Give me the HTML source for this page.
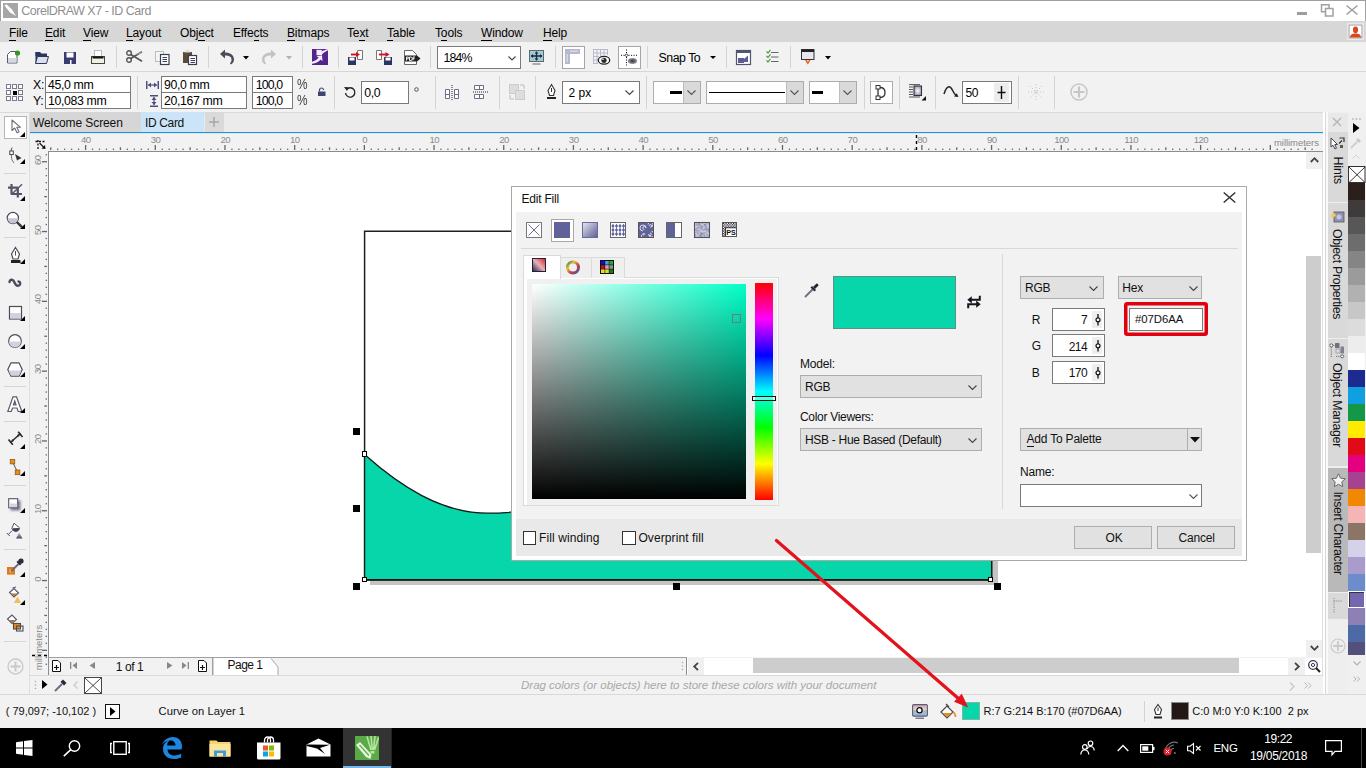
<!DOCTYPE html><html><head><meta charset="utf-8"><style>
html,body{margin:0;padding:0;}body{width:1366px;height:768px;position:relative;overflow:hidden;background:#f2f2f2;font-family:"Liberation Sans",sans-serif;}
div{position:absolute;box-sizing:border-box;}svg{position:absolute;overflow:visible;}.t{white-space:nowrap;}
u{text-decoration:none;border-bottom:1px solid currentColor;}
</style></head><body>
<div style="left:0px;top:0px;width:1366px;height:21px;background:#fff;border-top:1px solid #a0a0a0;border-left:1px solid #a0a0a0;border-right:1px solid #a0a0a0;"></div>
<svg style="left:3px;top:3px;" width="15" height="15" viewBox="0 0 15 15"><rect width="15" height="15" fill="#a6a6a6"/><path d="M1.5 2.5L3.5 1.2L9 6.5L13 13L7 9.5Z" fill="#fff"/><path d="M2 6L6.5 10.5L13.5 13.5L5 12.5Z" fill="#fff" opacity="0.0"/></svg>
<div class="t" style="left:21.3px;top:4.12px;font-size:12.5px;line-height:15px;color:#8f8f8f;letter-spacing:-0.5px;">CorelDRAW X7 - ID Card</div>
<div style="left:1297px;top:12px;width:10px;height:3px;background:#9e9e9e;"></div>
<svg style="left:1320px;top:4px;" width="14" height="13" viewBox="0 0 14 13"><rect x="1.5" y="0.75" width="7.5" height="7" fill="#fff" stroke="#a0a0a0" stroke-width="1.5"/><rect x="5.5" y="4.5" width="7.5" height="7.5" fill="#fff" stroke="#a0a0a0" stroke-width="1.5"/></svg>
<svg style="left:1346px;top:5px;" width="12" height="10" viewBox="0 0 12 10"><path d="M0.5 0.5L11.5 9.5M11.5 0.5L0.5 9.5" stroke="#a0a0a0" stroke-width="1.6"/></svg>
<div style="left:0px;top:21px;width:1366px;height:21px;background:#d7d7d7;"></div>
<div class="t" style="left:9px;top:25.63px;font-size:12px;line-height:14px;color:#000;letter-spacing:-0.15px;"><u>F</u>ile</div>
<div class="t" style="left:45px;top:25.63px;font-size:12px;line-height:14px;color:#000;letter-spacing:-0.15px;"><u>E</u>dit</div>
<div class="t" style="left:83px;top:25.63px;font-size:12px;line-height:14px;color:#000;letter-spacing:-0.15px;"><u>V</u>iew</div>
<div class="t" style="left:126px;top:25.63px;font-size:12px;line-height:14px;color:#000;letter-spacing:-0.15px;"><u>L</u>ayout</div>
<div class="t" style="left:180px;top:25.63px;font-size:12px;line-height:14px;color:#000;letter-spacing:-0.15px;">Obj<u>e</u>ct</div>
<div class="t" style="left:233px;top:25.63px;font-size:12px;line-height:14px;color:#000;letter-spacing:-0.15px;">Effe<u>c</u>ts</div>
<div class="t" style="left:287px;top:25.63px;font-size:12px;line-height:14px;color:#000;letter-spacing:-0.15px;"><u>B</u>itmaps</div>
<div class="t" style="left:347px;top:25.63px;font-size:12px;line-height:14px;color:#000;letter-spacing:-0.15px;">Te<u>x</u>t</div>
<div class="t" style="left:387px;top:25.63px;font-size:12px;line-height:14px;color:#000;letter-spacing:-0.15px;"><u>T</u>able</div>
<div class="t" style="left:435px;top:25.63px;font-size:12px;line-height:14px;color:#000;letter-spacing:-0.15px;">T<u>o</u>ols</div>
<div class="t" style="left:481px;top:25.63px;font-size:12px;line-height:14px;color:#000;letter-spacing:-0.15px;"><u>W</u>indow</div>
<div class="t" style="left:543px;top:25.63px;font-size:12px;line-height:14px;color:#000;letter-spacing:-0.15px;"><u>H</u>elp</div>
<div style="left:1347px;top:23px;width:17px;height:17px;background:#fff;border:1px solid #e8e8e8;"></div>
<svg style="left:1349px;top:25px;" width="13" height="13" viewBox="0 0 13 13"><rect x="0" y="0" width="13" height="13" fill="#fff" stroke="#9a9a9a" stroke-width="1"/><ellipse cx="6.5" cy="4.8" rx="2.6" ry="3.4" fill="#d9471c"/><path d="M0.8 12.5C1.5 9.2 3.5 8.5 6.5 8.5C9.5 8.5 11.5 9.2 12.2 12.5Z" fill="#d9471c"/></svg>
<div style="left:0px;top:42px;width:1366px;height:30px;background:#f2f2f2;border-bottom:1px solid #d6d6d6;"></div>
<svg style="left:6px;top:50px;" width="15" height="14" viewBox="0 0 15 14"><path d="M1.5 4.5L4.5 1.5H11V13H1.5Z" fill="#fff" stroke="#555a70" stroke-width="1"/><rect x="2" y="8" width="8.5" height="4.5" fill="#d6d8e2"/><circle cx="11.5" cy="3" r="2.6" fill="#2e9a1e"/></svg>
<svg style="left:35px;top:51px;" width="14" height="13" viewBox="0 0 14 13"><path d="M0.5 1H5L6.5 2.5H12V5H0.5Z" fill="#2c3561"/><rect x="0.5" y="1" width="2" height="11.5" fill="#2c3561"/><path d="M0.5 12.5L2.5 5.5H13.5L11.5 12.5Z" fill="#dde0ea" stroke="#2c3561" stroke-width="1"/></svg>
<svg style="left:64px;top:52px;" width="12" height="12" viewBox="0 0 12 12"><rect x="0" y="0" width="12" height="12" fill="#383c70"/><rect x="2.5" y="0.5" width="7" height="5" fill="#fff"/><rect x="6" y="8" width="1.5" height="4" fill="#fff"/></svg>
<svg style="left:91px;top:50px;" width="14" height="14" viewBox="0 0 14 14"><rect x="3.5" y="0.5" width="7" height="6" fill="#fff" stroke="#bbb" stroke-width="1"/><rect x="0.5" y="6.5" width="13" height="7" fill="#f3efdf" stroke="#444" stroke-width="1"/><rect x="1.5" y="6.5" width="11" height="2" fill="#111"/></svg>
<div style="left:116px;top:46px;width:1px;height:22px;background:#d4d4d4;"></div>
<svg style="left:126px;top:50px;" width="17" height="13" viewBox="0 0 17 13"><circle cx="3" cy="3" r="2.3" fill="none" stroke="#555" stroke-width="1.4"/><circle cx="3" cy="10" r="2.3" fill="none" stroke="#555" stroke-width="1.4"/><path d="M4.8 8.5L16 1.8M4.8 4.5L16 11.2" stroke="#555" stroke-width="1.6"/><path d="M9 5L16 1.8L15 3.5Z" fill="#aaa"/></svg>
<svg style="left:155px;top:51px;" width="15" height="14" viewBox="0 0 15 14"><rect x="0.5" y="0.5" width="8" height="10" fill="#f4f6f4" stroke="#b8c0b8" stroke-width="1"/><rect x="5.5" y="3.5" width="8.5" height="10" fill="#fff" stroke="#3a3e55" stroke-width="1.2"/><path d="M7.5 6.5H12M7.5 8.5H12M7.5 10.5H12" stroke="#3a3e55" stroke-width="1"/></svg>
<svg style="left:183px;top:50px;" width="14" height="15" viewBox="0 0 14 15"><rect x="0" y="2" width="9" height="11" fill="#5a4a3a"/><path d="M1.5 2.5H7.5L6 0H3Z" fill="#ddd"/><rect x="5.5" y="5.5" width="8" height="9" fill="#fff" stroke="#3a3e55" stroke-width="1.2"/><path d="M7.5 8.5H12M7.5 10.5H12M7.5 12.5H12" stroke="#3a3e55" stroke-width="1"/></svg>
<div style="left:208px;top:46px;width:1px;height:22px;background:#d4d4d4;"></div>
<svg style="left:219px;top:49px;" width="16" height="16" viewBox="0 0 16 16"><path d="M1 5L6 0.5V3.5C11 3.5 15 6 15 10.5C15 13 13.5 15 11.5 15.5L11 14C12 13.5 12.5 12 12.5 10.5C12.5 7.5 10 6.5 6 6.5V9.5Z" fill="#4b4b5a"/></svg>
<svg style="left:243px;top:56px;" width="6" height="3.5" viewBox="0 0 6 3.5"><path d="M0 0H6L3.0 3.5Z" fill="#000"/></svg>
<svg style="left:261px;top:49px;" width="16" height="16" viewBox="0 0 16 16"><path d="M15 5L10 0.5V3.5C5 3.5 1 6 1 10.5C1 13 2.5 15 4.5 15.5L5 14C4 13.5 3.5 12 3.5 10.5C3.5 7.5 6 6.5 10 6.5V9.5Z" fill="#c2c2c2"/></svg>
<svg style="left:286px;top:56px;" width="6" height="3.5" viewBox="0 0 6 3.5"><path d="M0 0H6L3.0 3.5Z" fill="#b0b0b0"/></svg>
<div style="left:302px;top:46px;width:1px;height:22px;background:#d4d4d4;"></div>
<svg style="left:312px;top:49px;" width="16" height="16" viewBox="0 0 16 16"><rect width="16" height="16" fill="#55248a"/><path d="M4.5 0.8L10.5 1L9.2 2.6C11.2 1.8 13.2 0.7 16 0V1.2C13.5 2.4 11.2 3.8 10 5.6L10 6.2H4.5Z" fill="#f4ecff"/><path d="M0 12.8C2.8 12 5 10.8 6.6 8.6L4.4 7.3L10 6.6L10.5 12.2L8.7 10.4C7 12.6 4 14 0 14.8Z" fill="#f4ecff"/></svg>
<div style="left:338px;top:46px;width:1px;height:22px;background:#d4d4d4;"></div>
<svg style="left:347px;top:50px;" width="18" height="15" viewBox="0 0 18 15"><path d="M10.5 0.5H15.5V9.5H10.5L10.5 3Z" fill="#fff" stroke="#777" stroke-width="1"/><rect x="1" y="7" width="8" height="8" fill="#2c3561"/><rect x="2.5" y="7.5" width="5" height="3" fill="#fff"/><path d="M4 4.5H10" stroke="#d0101a" stroke-width="1.8"/><path d="M9 2L13 4.5L9 7Z" fill="#d0101a"/></svg>
<svg style="left:376px;top:50px;" width="17" height="15" viewBox="0 0 17 15"><path d="M0.5 0.5H5.5V9.5H0.5Z" fill="#fff" stroke="#777" stroke-width="1"/><rect x="8" y="7" width="8" height="8" fill="#2c3561"/><rect x="9.5" y="7.5" width="5" height="3" fill="#fff"/><path d="M3 4.5H10" stroke="#d0101a" stroke-width="1.8"/><path d="M9.5 2L13.5 4.5L9.5 7Z" fill="#d0101a"/></svg>
<svg style="left:404px;top:50px;" width="17" height="15" viewBox="0 0 17 15"><path d="M0.5 0.5H8.5L12.5 4.5V14.5H0.5Z" fill="#fff" stroke="#666" stroke-width="1"/><path d="M1 5.5H13L16.5 8.5L13 11.5H1Z" fill="#222"/><path d="M2.5 7V10.5M2.5 7H4.3V8.8H2.5M5.5 7V10.5H7A1 1.5 0 0 0 7 7H5.5M9 7V10.5M9 7H11M9 8.7H10.7" fill="none" stroke="#fff" stroke-width="0.9"/></svg>
<div style="left:430px;top:46px;width:1px;height:22px;background:#d4d4d4;"></div>
<div style="left:437px;top:46px;width:84px;height:23px;background:#fff;border:1px solid #7a7a7a;"></div>
<div class="t" style="left:443.6px;top:51.04px;font-size:12.3px;line-height:15px;color:#000;letter-spacing:-0.9px;">184%</div>
<svg style="left:508px;top:55.5px;" width="8" height="4.5" viewBox="0 0 8 4.5"><path d="M0.5 0.5L4.0 4.0L7.5 0.5" fill="none" stroke="#444" stroke-width="1.1"/></svg>
<svg style="left:529px;top:50px;" width="15" height="15" viewBox="0 0 15 15"><rect x="0.5" y="0.5" width="14" height="11" fill="#9fcbd8" stroke="#666" stroke-width="1"/><rect x="3.5" y="13.5" width="8" height="1" fill="#666"/><path d="M2 6H13M7.5 1.8V10.2" stroke="#1c2a3a" stroke-width="1.3"/><path d="M1.8 6L4 4V8ZM13.2 6L11 4V8ZM7.5 1.6L5.5 3.6H9.5ZM7.5 10.4L5.5 8.4H9.5Z" fill="#1c2a3a"/></svg>
<div style="left:555px;top:46px;width:1px;height:22px;background:#d4d4d4;"></div>
<div style="left:562px;top:46px;width:23px;height:23px;background:#fff;border:1px solid #a5a5a5;"></div>
<svg style="left:565px;top:49px;" width="16" height="15" viewBox="0 0 16 15"><path d="M0 0H15V5H5V15H0Z" fill="#b4b9cc"/><path d="M6 1.5V3M8 1.5V3M10 1.5V3M12 1.5V3M1.5 6H3M1.5 8H3M1.5 10H3M1.5 12H3" stroke="#fff" stroke-width="0.9"/></svg>
<svg style="left:593px;top:49px;" width="17" height="16" viewBox="0 0 17 16"><path d="M0.5 0V15M4 0V15M7.5 0V8M11 0V6M14.5 0V6M0 0.5H15M0 4H15M0 7.5H6M0 11H5M0 14.5H5" stroke="#b4b4cc" stroke-width="0.9"/><ellipse cx="11" cy="11.3" rx="5.7" ry="3.9" fill="#fff" stroke="#222" stroke-width="1.3"/><circle cx="11" cy="11.3" r="2.6" fill="#2a2a2a"/><circle cx="10" cy="10.3" r="0.8" fill="#fff"/></svg>
<div style="left:618px;top:46px;width:23px;height:23px;background:#fff;border:1px solid #a5a5a5;"></div>
<svg style="left:621px;top:49px;" width="17" height="17" viewBox="0 0 17 17"><path d="M5.5 0.5V16.5M0 6.3H16" stroke="#111" stroke-width="1" stroke-dasharray="1.1 1.4"/><path d="M5.5 4.8L7 6.3L5.5 7.8L4 6.3Z" fill="#fff" stroke="#111" stroke-width="0.8"/><defs><radialGradient id="eg"><stop offset="0" stop-color="#333"/><stop offset="1" stop-color="#9a9aa8"/></radialGradient></defs><ellipse cx="11.5" cy="12" rx="4.6" ry="3" fill="url(#eg)"/></svg>
<div style="left:647px;top:46px;width:1px;height:22px;background:#d4d4d4;"></div>
<div class="t" style="left:658.5px;top:51.24px;font-size:12.3px;line-height:15px;color:#000;letter-spacing:-0.45px;">Snap To</div>
<svg style="left:710px;top:56px;" width="6" height="3" viewBox="0 0 6 3"><path d="M0 0H6L3.0 3Z" fill="#000"/></svg>
<div style="left:726px;top:46px;width:1px;height:22px;background:#d4d4d4;"></div>
<svg style="left:736px;top:50px;" width="15" height="15" viewBox="0 0 15 15"><rect x="0.5" y="0.5" width="14" height="14" fill="#fff" stroke="#505570" stroke-width="1.2"/><rect x="0.5" y="0.5" width="14" height="2.5" fill="#505570"/><rect x="2" y="8" width="6" height="5" fill="#5b5c9a"/><path d="M8 9L12 5.5V12H8Z" fill="#5b5c9a"/></svg>
<svg style="left:766px;top:49px;" width="13" height="15" viewBox="0 0 13 15"><path d="M0.5 2.5L2 4L4.5 0.8M0.5 7L2 8.5L4.5 5.3M0.5 11.5L2 13L4.5 9.8" fill="none" stroke="#3c9a2c" stroke-width="1.1"/><path d="M5 3.5H12.5M5 8H12.5M5 12.5H12.5" stroke="#666" stroke-width="1"/></svg>
<div style="left:790px;top:46px;width:1px;height:22px;background:#d4d4d4;"></div>
<svg style="left:801px;top:49px;" width="14" height="16" viewBox="0 0 14 16"><rect x="0.5" y="0.5" width="12.5" height="10" fill="#e6e6ee" stroke="#333" stroke-width="1"/><rect x="0.5" y="0.5" width="12.5" height="2.5" fill="#222"/><path d="M4 11L6.8 15.5L9.5 11Z" fill="#e84a20"/><path d="M5.3 11L6.8 13.5L8.3 11Z" fill="#ffc640"/></svg>
<svg style="left:825px;top:56px;" width="6" height="3.5" viewBox="0 0 6 3.5"><path d="M0 0H6L3.0 3.5Z" fill="#000"/></svg>
<div style="left:0px;top:72px;width:1366px;height:40px;background:#f2f2f2;"></div>
<svg style="left:6px;top:84px;" width="16" height="16" viewBox="0 0 16 16"><rect x="0.5" y="0.5" width="4" height="4" fill="#fff" stroke="#7b7b8e" stroke-width="1"/><rect x="0.5" y="6.5" width="4" height="4" fill="#fff" stroke="#7b7b8e" stroke-width="1"/><rect x="0.5" y="12.5" width="4" height="4" fill="#fff" stroke="#7b7b8e" stroke-width="1"/><rect x="6.5" y="0.5" width="4" height="4" fill="#fff" stroke="#7b7b8e" stroke-width="1"/><rect x="7.0" y="7.0" width="4" height="4" fill="#000"/><rect x="6.5" y="12.5" width="4" height="4" fill="#fff" stroke="#7b7b8e" stroke-width="1"/><rect x="12.5" y="0.5" width="4" height="4" fill="#fff" stroke="#7b7b8e" stroke-width="1"/><rect x="12.5" y="6.5" width="4" height="4" fill="#fff" stroke="#7b7b8e" stroke-width="1"/><rect x="12.5" y="12.5" width="4" height="4" fill="#fff" stroke="#7b7b8e" stroke-width="1"/></svg>
<div class="t" style="left:33px;top:77.94px;font-size:12.3px;line-height:15px;color:#000;letter-spacing:-0.3px;">X:</div>
<div class="t" style="left:33px;top:93.94px;font-size:12.3px;line-height:15px;color:#000;letter-spacing:-0.3px;">Y:</div>
<div style="left:45px;top:76px;width:86px;height:17px;background:#fff;border:1px solid #7a7a7a;"></div>
<div style="left:45px;top:92px;width:86px;height:17px;background:#fff;border:1px solid #7a7a7a;"></div>
<div class="t" style="left:48px;top:77.94px;font-size:12.3px;line-height:15px;color:#000;letter-spacing:-0.35px;">45,0 mm</div>
<div class="t" style="left:48px;top:93.94px;font-size:12.3px;line-height:15px;color:#000;letter-spacing:-0.35px;">10,083 mm</div>
<div style="left:137px;top:76px;width:1px;height:33px;background:#d4d4d4;"></div>
<svg style="left:146px;top:81px;" width="13" height="8" viewBox="0 0 13 8"><path d="M0.75 0V8M12.25 0V8" stroke="#4a4f80" stroke-width="1.5"/><path d="M2 4H11" stroke="#4a4f80" stroke-width="1.2"/><path d="M2 4L5 1.5V6.5ZM11 4L8 1.5V6.5Z" fill="#4a4f80"/></svg>
<svg style="left:149.5px;top:95px;" width="8" height="12" viewBox="0 0 8 12"><path d="M0 0.75H8M0 11.25H8" stroke="#4a4f80" stroke-width="1.5"/><path d="M4 2V10" stroke="#4a4f80" stroke-width="1.2"/><path d="M4 2L1.5 5H6.5ZM4 10L1.5 7H6.5Z" fill="#4a4f80"/></svg>
<div style="left:161px;top:76px;width:86px;height:17px;background:#fff;border:1px solid #7a7a7a;"></div>
<div style="left:161px;top:92px;width:86px;height:17px;background:#fff;border:1px solid #7a7a7a;"></div>
<div class="t" style="left:164px;top:77.94px;font-size:12.3px;line-height:15px;color:#000;letter-spacing:-0.35px;">90,0 mm</div>
<div class="t" style="left:164px;top:93.94px;font-size:12.3px;line-height:15px;color:#000;letter-spacing:-0.35px;">20,167 mm</div>
<div style="left:252px;top:76px;width:41px;height:17px;background:#fff;border:1px solid #7a7a7a;"></div>
<div style="left:252px;top:92px;width:41px;height:17px;background:#fff;border:1px solid #7a7a7a;"></div>
<div class="t" style="left:255.8px;top:77.94px;font-size:12.3px;line-height:15px;color:#000;letter-spacing:-0.85px;">100,0</div>
<div class="t" style="left:255.8px;top:94.14px;font-size:12.3px;line-height:15px;color:#000;letter-spacing:-0.85px;">100,0</div>
<div class="t" style="left:297px;top:76.20px;font-size:14px;line-height:17px;color:#444;transform:scaleX(0.85);transform-origin:0 0;">%</div>
<div class="t" style="left:297px;top:92.40px;font-size:14px;line-height:17px;color:#444;transform:scaleX(0.85);transform-origin:0 0;">%</div>
<svg style="left:318px;top:88px;" width="8" height="8" viewBox="0 0 8 8"><path d="M1.5 3.5V2A2 2 0 0 1 5.5 2" fill="none" stroke="#3f4470" stroke-width="1.2"/><rect x="0" y="3.5" width="7.5" height="4.5" fill="#3f4470"/></svg>
<div style="left:334px;top:76px;width:1px;height:33px;background:#d4d4d4;"></div>
<svg style="left:344px;top:86px;" width="12" height="12" viewBox="0 0 12 12"><path d="M2.5 3.5A4.7 4.7 0 1 1 1.5 7" fill="none" stroke="#222" stroke-width="1.4"/><path d="M0 1L4.5 1.2L3 5Z" fill="#222"/></svg>
<div style="left:361px;top:81px;width:48px;height:23px;background:#fff;border:1px solid #7a7a7a;"></div>
<div class="t" style="left:364.3px;top:85.54px;font-size:12.3px;line-height:15px;color:#000;letter-spacing:-0.4px;">0,0</div>
<svg style="left:414px;top:87px;" width="5" height="5" viewBox="0 0 5 5"><circle cx="2.5" cy="2.5" r="1.8" fill="none" stroke="#444" stroke-width="0.9"/></svg>
<div style="left:435px;top:76px;width:1px;height:33px;background:#d4d4d4;"></div>
<svg style="left:444px;top:84px;" width="16" height="16" viewBox="0 0 16 16"><path d="M1.5 5.5H5.5V14.5H1.5Z M10.5 5.5H14.5V14.5H10.5Z" fill="#fff" stroke="#6a6e88" stroke-width="1"/><path d="M1.5 10.5H5.5M10.5 10.5H14.5" stroke="#6a6e88"/><path d="M8 1V16" stroke="#222" stroke-width="1" stroke-dasharray="1 1"/></svg>
<svg style="left:473px;top:84px;" width="16" height="16" viewBox="0 0 16 16"><path d="M1.5 1.5H10.5V5.5H1.5Z M1.5 10.5H10.5V14.5H1.5Z" fill="#fff" stroke="#6a6e88" stroke-width="1"/><path d="M6.5 1.5V5.5M6.5 10.5V14.5" stroke="#6a6e88"/><path d="M0 8H16" stroke="#222" stroke-width="1" stroke-dasharray="1 1"/></svg>
<div style="left:499px;top:76px;width:1px;height:33px;background:#d4d4d4;"></div>
<svg style="left:509px;top:84px;" width="16" height="16" viewBox="0 0 16 16"><rect x="0.5" y="0.5" width="9" height="9" fill="#ddd" stroke="#ccc"/><rect x="6.5" y="6.5" width="9" height="9" fill="#ddd" stroke="#ccc"/><path d="M11 1H15V5M5 15H1V11" fill="none" stroke="#bbb"/></svg>
<div style="left:535px;top:76px;width:1px;height:33px;background:#d4d4d4;"></div>
<svg style="left:546px;top:84px;" width="11" height="16" viewBox="0 0 11 16"><path d="M5.5 0.5L9 6.5L7.5 11.5H3.5L2 6.5Z" fill="#fff" stroke="#333" stroke-width="1.1"/><path d="M5.5 4V8" stroke="#333"/><rect x="1" y="13" width="9" height="2" fill="#222"/></svg>
<div style="left:562px;top:81px;width:78px;height:23px;background:#fff;border:1px solid #7a7a7a;"></div>
<div class="t" style="left:568.5px;top:85.63px;font-size:12px;line-height:14px;color:#000;">2 px</div>
<svg style="left:625px;top:90px;" width="9" height="5" viewBox="0 0 9 5"><path d="M0.5 0.5L4.5 4.5L8.5 0.5" fill="none" stroke="#444" stroke-width="1.1"/></svg>
<div style="left:646px;top:76px;width:1px;height:33px;background:#d4d4d4;"></div>
<div style="left:653px;top:81px;width:48px;height:23px;background:#fff;border:1px solid #adadad;"></div>
<div style="left:670px;top:91px;width:12px;height:3px;background:#000;"></div>
<div style="left:683px;top:82px;width:17px;height:21px;background:#d9d9d9;border-left:1px solid #bdbdbd;"></div>
<svg style="left:687px;top:90px;" width="9" height="5" viewBox="0 0 9 5"><path d="M0.5 0.5L4.5 4.5L8.5 0.5" fill="none" stroke="#555" stroke-width="1.1"/></svg>
<div style="left:706px;top:81px;width:98px;height:23px;background:#fff;border:1px solid #adadad;"></div>
<div style="left:709px;top:92px;width:76px;height:1px;background:#000;"></div>
<div style="left:786px;top:82px;width:17px;height:21px;background:#d9d9d9;border-left:1px solid #bdbdbd;"></div>
<svg style="left:790px;top:90px;" width="9" height="5" viewBox="0 0 9 5"><path d="M0.5 0.5L4.5 4.5L8.5 0.5" fill="none" stroke="#555" stroke-width="1.1"/></svg>
<div style="left:809px;top:81px;width:48px;height:23px;background:#fff;border:1px solid #adadad;"></div>
<div style="left:812px;top:91px;width:11px;height:3px;background:#000;"></div>
<div style="left:839px;top:82px;width:17px;height:21px;background:#d9d9d9;border-left:1px solid #bdbdbd;"></div>
<svg style="left:843px;top:90px;" width="9" height="5" viewBox="0 0 9 5"><path d="M0.5 0.5L4.5 4.5L8.5 0.5" fill="none" stroke="#555" stroke-width="1.1"/></svg>
<div style="left:864px;top:76px;width:1px;height:33px;background:#d4d4d4;"></div>
<div style="left:870px;top:81px;width:23px;height:23px;background:#fff;border:1px solid #adadad;"></div>
<svg style="left:875px;top:85px;" width="12" height="15" viewBox="0 0 12 15"><path d="M3 2.5H5C8.5 2.5 10 5 10 7.5C10 10 8.5 12.5 5 12.5H3" fill="none" stroke="#333" stroke-width="1.3"/><path d="M3 2.5V12.5" stroke="#333" stroke-width="1.3"/><rect x="1" y="0.5" width="4" height="3.5" fill="#fff" stroke="#333" stroke-width="1"/><rect x="1" y="11" width="4" height="3.5" fill="#fff" stroke="#333" stroke-width="1"/></svg>
<div style="left:899px;top:76px;width:1px;height:33px;background:#d4d4d4;"></div>
<svg style="left:909px;top:84px;" width="19" height="17" viewBox="0 0 19 17"><path d="M0 0.6H11M0 3H4M0 5.5H4M0 8H4M0 10.5H4M0 13H11" stroke="#444" stroke-width="0.9"/><defs><radialGradient id="wg"><stop offset="0" stop-color="#fff"/><stop offset="1" stop-color="#9a9cb8"/></radialGradient></defs><rect x="5" y="2" width="7.5" height="9.5" fill="url(#wg)" stroke="#333" stroke-width="1.1"/><path d="M12.5 16.5L17 16.5L17 12Z" fill="#111"/></svg>
<div style="left:935px;top:76px;width:1px;height:33px;background:#d4d4d4;"></div>
<svg style="left:943px;top:85px;" width="17" height="14" viewBox="0 0 17 14"><path d="M1 9C2.5 4 4.5 1.5 6.5 1.8C9 2.2 10 8 13 10.5" fill="none" stroke="#222" stroke-width="1.5"/><path d="M15.5 12L11 11.5L13.8 8.2Z" fill="#222"/></svg>
<div style="left:962px;top:81px;width:50px;height:23px;background:#fff;border:1px solid #7a7a7a;"></div>
<div class="t" style="left:965.5px;top:85.63px;font-size:12px;line-height:14px;color:#000;letter-spacing:-0.3px;">50</div>
<div style="left:994px;top:83px;width:15px;height:19px;background:#ededed;"></div>
<svg style="left:996px;top:85px;" width="11" height="15" viewBox="0 0 11 15"><path d="M5.5 1V14M1.5 7.5H9.5" stroke="#111" stroke-width="1.4"/></svg>
<div style="left:1018px;top:76px;width:1px;height:33px;background:#d4d4d4;"></div>
<svg style="left:1027px;top:83px;" width="18" height="18" viewBox="0 0 18 18"><path d="M3 3L15 15M15 3L3 15M1 9H17M9 1V17" stroke="#c8c8c8" stroke-width="1" stroke-dasharray="1.2 1.8"/></svg>
<div style="left:1054px;top:76px;width:1px;height:33px;background:#d4d4d4;"></div>
<svg style="left:1070px;top:83px;" width="18" height="18" viewBox="0 0 18 18"><circle cx="9" cy="9" r="8" fill="none" stroke="#c6c6c6" stroke-width="1.5"/><path d="M9 3.5V14.5M3.5 9H14.5" stroke="#c6c6c6" stroke-width="2.2"/></svg>
<div style="left:29px;top:112px;width:1294px;height:20px;background:#ebebeb;"></div>
<div style="left:0px;top:112px;width:1366px;height:1px;background:#d9d9d9;"></div>
<div style="left:29px;top:112px;width:112px;height:20px;background:#d6d6d6;"></div>
<div class="t" style="left:33px;top:115.53px;font-size:12px;line-height:14px;color:#111;letter-spacing:-0.1px;">Welcome Screen</div>
<div style="left:141px;top:112px;width:63px;height:20px;background:#cce4f7;"></div>
<div class="t" style="left:145px;top:115.53px;font-size:12px;line-height:14px;color:#111;letter-spacing:-0.35px;">ID Card</div>
<div style="left:205px;top:112px;width:19px;height:20px;background:#dadada;"></div>
<svg style="left:208px;top:116px;" width="12" height="12" viewBox="0 0 12 12"><path d="M6 1V11M1 6H11" stroke="#a8a8a8" stroke-width="1.5"/></svg>
<div style="left:29px;top:132px;width:1294px;height:1px;background:#2f8fd0;"></div>
<div style="left:29px;top:133px;width:1294px;height:1px;background:#c9ecf6;"></div>
<div style="left:0px;top:112px;width:29px;height:582px;background:#f2f2f2;"></div>
<div style="left:29px;top:112px;width:1px;height:582px;background:#dedede;"></div>
<div style="left:0px;top:112px;width:29px;height:1px;background:#d9d9d9;"></div>
<div style="left:4px;top:116px;width:23px;height:23px;background:#fff;border:1px solid #b5b5b5;"></div>
<svg style="left:10.5px;top:119px;" width="10" height="15" viewBox="0 0 10 15"><path d="M1 1V11.5L3.7 9L6 13.8L8 12.8L5.8 8.3H9.5Z" fill="#fff" stroke="#6b6b7a" stroke-width="1.1" stroke-linejoin="round"/></svg>
<svg style="left:20px;top:132px;" width="5" height="5" viewBox="0 0 5 5"><path d="M5 0V5H0Z" fill="#000"/></svg>
<svg style="left:8px;top:147px;" width="20" height="18" viewBox="0 0 20 18"><path d="M4 0.5L3 4" stroke="#555" stroke-width="1"/><rect x="1.8" y="4" width="3.5" height="3.5" fill="#fff" stroke="#444" stroke-width="1"/><path d="M3.5 7.5C3 11 4 14 6 16" fill="none" stroke="#777" stroke-width="1"/><path d="M7 7L13.5 11L9 13.5Z" fill="#333"/></svg>
<svg style="left:20px;top:159px;" width="5" height="5" viewBox="0 0 5 5"><path d="M5 0V5H0Z" fill="#000"/></svg>
<div style="left:4px;top:173px;width:22px;height:1px;background:#d6d6d6;"></div>
<svg style="left:8px;top:184px;" width="16" height="16" viewBox="0 0 16 16"><path d="M0 3.7H10M3.5 0V10.5M3 10H14M9.8 4V13.5" fill="none" stroke="#55556a" stroke-width="2.2"/><path d="M14 0.3L4 10" stroke="#55556a" stroke-width="1.4"/></svg>
<svg style="left:20px;top:196px;" width="5" height="5" viewBox="0 0 5 5"><path d="M5 0V5H0Z" fill="#000"/></svg>
<svg style="left:6px;top:211px;" width="20" height="18" viewBox="0 0 20 18"><circle cx="6.85" cy="7" r="5.6" fill="#fff" stroke="#4b4b5a" stroke-width="1.2"/><path d="M1.6 7.2H12.1A5.25 5.25 0 0 1 1.6 7.2Z" fill="#c4c6d8"/><path d="M10.8 11L16 16.2" stroke="#333" stroke-width="2.4"/></svg>
<svg style="left:20px;top:224px;" width="5" height="5" viewBox="0 0 5 5"><path d="M5 0V5H0Z" fill="#000"/></svg>
<div style="left:4px;top:237px;width:22px;height:1px;background:#d6d6d6;"></div>
<svg style="left:10px;top:247px;" width="12" height="17" viewBox="0 0 12 17"><path d="M5.5 0.5L9.5 7L8 12H3L1.5 7Z" fill="#fff" stroke="#4b4b5a" stroke-width="1.2"/><path d="M5.5 4V8.5" stroke="#4b4b5a"/><rect x="1" y="13" width="9.5" height="3" fill="#222"/></svg>
<svg style="left:20px;top:259px;" width="5" height="5" viewBox="0 0 5 5"><path d="M5 0V5H0Z" fill="#000"/></svg>
<svg style="left:8px;top:278px;" width="14" height="10" viewBox="0 0 14 10"><path d="M1.5 4C2 1 5 1 6 3.5C7 6 8.5 8.5 11 7.5C13 6.5 12.5 3.5 10.5 3.5" fill="none" stroke="#4b4b5a" stroke-width="2.4" stroke-linecap="round"/></svg>
<svg style="left:9px;top:306px;" width="13" height="14" viewBox="0 0 13 14"><rect x="0.5" y="0.5" width="12" height="12.5" fill="#fff" stroke="#4b4b5a" stroke-width="1.2"/><rect x="1" y="7" width="11" height="5.5" fill="#d0d2de"/></svg>
<svg style="left:20px;top:316px;" width="5" height="5" viewBox="0 0 5 5"><path d="M5 0V5H0Z" fill="#000"/></svg>
<svg style="left:8px;top:334px;" width="14" height="14" viewBox="0 0 14 14"><circle cx="7" cy="7" r="6.3" fill="#fff" stroke="#4b4b5a" stroke-width="1.2"/><path d="M1 7.5H13A6 6 0 0 1 1 7.5Z" fill="#d0d2de"/></svg>
<svg style="left:20px;top:344px;" width="5" height="5" viewBox="0 0 5 5"><path d="M5 0V5H0Z" fill="#000"/></svg>
<svg style="left:7px;top:362px;" width="16" height="15" viewBox="0 0 16 15"><path d="M4 0.8H12L15.2 7.5L12 14.2H4L0.8 7.5Z" fill="#fff" stroke="#4b4b5a" stroke-width="1.2"/><path d="M1.5 8.5H14.5L12 13.5H4Z" fill="#d0d2de"/></svg>
<svg style="left:20px;top:372px;" width="5" height="5" viewBox="0 0 5 5"><path d="M5 0V5H0Z" fill="#000"/></svg>
<div style="left:4px;top:386px;width:22px;height:1px;background:#d6d6d6;"></div>
<svg style="left:7px;top:396px;" width="16" height="16" viewBox="0 0 16 16"><path d="M0.8 15.5L6 0.8H9.5L14.8 15.5H11.2L10 12H5.5L4.3 15.5Z M6.5 9H9L7.75 5Z" fill="#fff" stroke="#5a5a6a" stroke-width="1.2" fill-rule="evenodd"/><path d="M2 14L6.5 2" stroke="#d8d8e0" stroke-width="0"/></svg>
<svg style="left:20px;top:408px;" width="5" height="5" viewBox="0 0 5 5"><path d="M5 0V5H0Z" fill="#000"/></svg>
<div style="left:4px;top:421px;width:22px;height:1px;background:#d6d6d6;"></div>
<svg style="left:8px;top:431px;" width="15" height="15" viewBox="0 0 15 15"><path d="M2.5 11.5L12.5 2.5" stroke="#2a2a35" stroke-width="1.5"/><path d="M0.5 8.5L4.8 13.8M10.2 0.8L14.5 6" stroke="#2a2a35" stroke-width="1.7"/><path d="M2.5 11.5L4.5 8L6 10ZM12.5 2.5L10.5 6L9 4Z" fill="#2a2a35"/></svg>
<svg style="left:20px;top:444px;" width="5" height="5" viewBox="0 0 5 5"><path d="M5 0V5H0Z" fill="#000"/></svg>
<svg style="left:9px;top:459px;" width="14" height="16" viewBox="0 0 14 16"><path d="M3.5 3L8.5 13" stroke="#444" stroke-width="0.9"/><rect x="1.2" y="0.5" width="4.6" height="4.4" fill="#e58b22" stroke="#8a5010" stroke-width="0.7"/><rect x="6.2" y="11" width="4.7" height="4.7" fill="#e58b22" stroke="#8a5010" stroke-width="0.7"/></svg>
<svg style="left:20px;top:471px;" width="5" height="5" viewBox="0 0 5 5"><path d="M5 0V5H0Z" fill="#000"/></svg>
<div style="left:4px;top:485px;width:22px;height:1px;background:#d6d6d6;"></div>
<svg style="left:8px;top:498px;" width="15" height="15" viewBox="0 0 15 15"><defs><filter id="bl" x="-50%" y="-50%" width="200%" height="200%"><feGaussianBlur stdDeviation="0.9"/></filter></defs><rect x="2.5" y="2.5" width="10" height="10" fill="#7c7c90" filter="url(#bl)"/><rect x="0.7" y="0.7" width="9" height="9" fill="#fff" stroke="#555566" stroke-width="1.1"/><rect x="1.2" y="5.5" width="8" height="3.7" fill="#d4d5e2"/></svg>
<svg style="left:20px;top:508px;" width="5" height="5" viewBox="0 0 5 5"><path d="M5 0V5H0Z" fill="#000"/></svg>
<svg style="left:6px;top:522px;" width="18" height="18" viewBox="0 0 18 18"><defs><linearGradient id="tg" x1="0" y1="0" x2="0" y2="1"><stop offset="0" stop-color="#c8c8d8"/><stop offset="1" stop-color="#454560"/></linearGradient></defs><path d="M8 1.2L13.5 5.8A3.6 3.6 0 0 1 7.2 8.2L5.8 6.5Z" fill="#fff" stroke="#555566" stroke-width="1"/><path d="M6.3 6.2L13.5 6A3.6 3.6 0 0 1 7.2 8.2Z" fill="#3f3f55"/><path d="M6.5 8.3L2.3 12.5M0.8 11L3.8 14" stroke="#555566" stroke-width="1"/><path d="M10 16.5L13.2 10.5L16.5 16.5Z" fill="url(#tg)"/></svg>
<div style="left:4px;top:549px;width:22px;height:1px;background:#d6d6d6;"></div>
<svg style="left:7px;top:558px;" width="17" height="19" viewBox="0 0 17 19"><rect x="0" y="9" width="8" height="7.6" fill="#e07a18"/><rect x="2.5" y="11.5" width="3" height="3" fill="#f8c070"/><path d="M4 13.5L12 5.5" stroke="#6a6a78" stroke-width="1.8"/><path d="M9.5 4L13 7.5L14.5 6L11 2.5Z" fill="#2a2a3a"/><circle cx="14" cy="3" r="2.6" fill="#2a2a3a"/></svg>
<svg style="left:20px;top:572px;" width="5" height="5" viewBox="0 0 5 5"><path d="M5 0V5H0Z" fill="#000"/></svg>
<svg style="left:8px;top:587px;" width="17" height="17" viewBox="0 0 17 17"><path d="M1.5 5.5L6 1.5L10.5 6L6 10Z" fill="#fff" stroke="#55556a" stroke-width="1.1"/><path d="M2.6 6.5L9.4 6.5L6 9.2Z" fill="#b07a3a"/><path d="M4.5 1L8 0" stroke="#55556a" stroke-width="1"/><path d="M6 16L9.5 9.5L13 16Z" fill="#f0c050"/></svg>
<svg style="left:20px;top:600px;" width="5" height="5" viewBox="0 0 5 5"><path d="M5 0V5H0Z" fill="#000"/></svg>
<svg style="left:7px;top:614px;" width="17" height="18" viewBox="0 0 17 18"><path d="M0.5 5L5 1L9.5 5.5L5 9.5Z" fill="#fff" stroke="#55556a" stroke-width="1.1"/><path d="M1.6 6L8.4 6L5 8.7Z" fill="#b07a3a"/><rect x="6.5" y="9.5" width="7" height="5.5" fill="#e58b22" stroke="#4b4b5a" stroke-width="1.1"/><rect x="9.5" y="12" width="6.5" height="5" fill="none" stroke="#4b4b5a" stroke-width="1.1"/></svg>
<div style="left:4px;top:641px;width:22px;height:1px;background:#d6d6d6;"></div>
<svg style="left:6.5px;top:658px;" width="17" height="17" viewBox="0 0 17 17"><circle cx="8.5" cy="8.5" r="7.5" fill="none" stroke="#c9c9c9" stroke-width="1.3"/><path d="M8.5 3.5V13.5M3.5 8.5H13.5" stroke="#c9c9c9" stroke-width="2"/></svg>
<div style="left:30px;top:134px;width:1293px;height:18px;background:#f2f2f2;"></div>
<div style="left:30px;top:152px;width:18px;height:523px;background:#f2f2f2;"></div>
<svg style="left:35px;top:139px;" width="12" height="11" viewBox="0 0 12 11"><path d="M0.5 2.5H2.5M4 2.5H6M7.5 2.5H9.5M3 1V3M3 4.5V6.5M3 8V10" stroke="#111" stroke-width="1.3"/><path d="M4.5 4L9.5 9" stroke="#111" stroke-width="1.1"/><path d="M10.5 10L6.5 9.5L10 6Z" fill="#111"/></svg>
<svg style="left:0px;top:0px;pointer-events:none;" width="1366" height="768" viewBox="0 0 1366 768"><rect x="50.09" y="147.3" width="1.3" height="2.7" fill="#666"/><rect x="57.01" y="148.6" width="1.3" height="1.4" fill="#6a6a6a"/><rect x="63.98" y="148.6" width="1.3" height="1.4" fill="#6a6a6a"/><rect x="70.95" y="148.6" width="1.3" height="1.4" fill="#6a6a6a"/><rect x="77.92" y="148.6" width="1.3" height="1.4" fill="#6a6a6a"/><rect x="84.94" y="145" width="1.3" height="5" fill="#666"/><rect x="91.86" y="148.6" width="1.3" height="1.4" fill="#6a6a6a"/><rect x="98.83" y="148.6" width="1.3" height="1.4" fill="#6a6a6a"/><rect x="105.80" y="148.6" width="1.3" height="1.4" fill="#6a6a6a"/><rect x="112.77" y="148.6" width="1.3" height="1.4" fill="#6a6a6a"/><rect x="119.78" y="147.3" width="1.3" height="2.7" fill="#666"/><rect x="126.70" y="148.6" width="1.3" height="1.4" fill="#6a6a6a"/><rect x="133.67" y="148.6" width="1.3" height="1.4" fill="#6a6a6a"/><rect x="140.64" y="148.6" width="1.3" height="1.4" fill="#6a6a6a"/><rect x="147.61" y="148.6" width="1.3" height="1.4" fill="#6a6a6a"/><rect x="154.63" y="145" width="1.3" height="5" fill="#666"/><rect x="161.55" y="148.6" width="1.3" height="1.4" fill="#6a6a6a"/><rect x="168.52" y="148.6" width="1.3" height="1.4" fill="#6a6a6a"/><rect x="175.49" y="148.6" width="1.3" height="1.4" fill="#6a6a6a"/><rect x="182.46" y="148.6" width="1.3" height="1.4" fill="#6a6a6a"/><rect x="189.48" y="147.3" width="1.3" height="2.7" fill="#666"/><rect x="196.39" y="148.6" width="1.3" height="1.4" fill="#6a6a6a"/><rect x="203.36" y="148.6" width="1.3" height="1.4" fill="#6a6a6a"/><rect x="210.33" y="148.6" width="1.3" height="1.4" fill="#6a6a6a"/><rect x="217.30" y="148.6" width="1.3" height="1.4" fill="#6a6a6a"/><rect x="224.32" y="145" width="1.3" height="5" fill="#666"/><rect x="231.24" y="148.6" width="1.3" height="1.4" fill="#6a6a6a"/><rect x="238.21" y="148.6" width="1.3" height="1.4" fill="#6a6a6a"/><rect x="245.18" y="148.6" width="1.3" height="1.4" fill="#6a6a6a"/><rect x="252.15" y="148.6" width="1.3" height="1.4" fill="#6a6a6a"/><rect x="259.16" y="147.3" width="1.3" height="2.7" fill="#666"/><rect x="266.08" y="148.6" width="1.3" height="1.4" fill="#6a6a6a"/><rect x="273.05" y="148.6" width="1.3" height="1.4" fill="#6a6a6a"/><rect x="280.02" y="148.6" width="1.3" height="1.4" fill="#6a6a6a"/><rect x="286.99" y="148.6" width="1.3" height="1.4" fill="#6a6a6a"/><rect x="294.01" y="145" width="1.3" height="5" fill="#666"/><rect x="300.93" y="148.6" width="1.3" height="1.4" fill="#6a6a6a"/><rect x="307.90" y="148.6" width="1.3" height="1.4" fill="#6a6a6a"/><rect x="314.87" y="148.6" width="1.3" height="1.4" fill="#6a6a6a"/><rect x="321.84" y="148.6" width="1.3" height="1.4" fill="#6a6a6a"/><rect x="328.86" y="147.3" width="1.3" height="2.7" fill="#666"/><rect x="335.77" y="148.6" width="1.3" height="1.4" fill="#6a6a6a"/><rect x="342.74" y="148.6" width="1.3" height="1.4" fill="#6a6a6a"/><rect x="349.71" y="148.6" width="1.3" height="1.4" fill="#6a6a6a"/><rect x="356.68" y="148.6" width="1.3" height="1.4" fill="#6a6a6a"/><rect x="363.70" y="145" width="1.3" height="5" fill="#666"/><rect x="370.62" y="148.6" width="1.3" height="1.4" fill="#6a6a6a"/><rect x="377.59" y="148.6" width="1.3" height="1.4" fill="#6a6a6a"/><rect x="384.56" y="148.6" width="1.3" height="1.4" fill="#6a6a6a"/><rect x="391.53" y="148.6" width="1.3" height="1.4" fill="#6a6a6a"/><rect x="398.54" y="147.3" width="1.3" height="2.7" fill="#666"/><rect x="405.46" y="148.6" width="1.3" height="1.4" fill="#6a6a6a"/><rect x="412.43" y="148.6" width="1.3" height="1.4" fill="#6a6a6a"/><rect x="419.40" y="148.6" width="1.3" height="1.4" fill="#6a6a6a"/><rect x="426.37" y="148.6" width="1.3" height="1.4" fill="#6a6a6a"/><rect x="433.39" y="145" width="1.3" height="5" fill="#666"/><rect x="440.31" y="148.6" width="1.3" height="1.4" fill="#6a6a6a"/><rect x="447.28" y="148.6" width="1.3" height="1.4" fill="#6a6a6a"/><rect x="454.25" y="148.6" width="1.3" height="1.4" fill="#6a6a6a"/><rect x="461.22" y="148.6" width="1.3" height="1.4" fill="#6a6a6a"/><rect x="468.24" y="147.3" width="1.3" height="2.7" fill="#666"/><rect x="475.15" y="148.6" width="1.3" height="1.4" fill="#6a6a6a"/><rect x="482.12" y="148.6" width="1.3" height="1.4" fill="#6a6a6a"/><rect x="489.09" y="148.6" width="1.3" height="1.4" fill="#6a6a6a"/><rect x="496.06" y="148.6" width="1.3" height="1.4" fill="#6a6a6a"/><rect x="503.08" y="145" width="1.3" height="5" fill="#666"/><rect x="510.00" y="148.6" width="1.3" height="1.4" fill="#6a6a6a"/><rect x="516.97" y="148.6" width="1.3" height="1.4" fill="#6a6a6a"/><rect x="523.94" y="148.6" width="1.3" height="1.4" fill="#6a6a6a"/><rect x="530.91" y="148.6" width="1.3" height="1.4" fill="#6a6a6a"/><rect x="537.92" y="147.3" width="1.3" height="2.7" fill="#666"/><rect x="544.84" y="148.6" width="1.3" height="1.4" fill="#6a6a6a"/><rect x="551.81" y="148.6" width="1.3" height="1.4" fill="#6a6a6a"/><rect x="558.78" y="148.6" width="1.3" height="1.4" fill="#6a6a6a"/><rect x="565.75" y="148.6" width="1.3" height="1.4" fill="#6a6a6a"/><rect x="572.77" y="145" width="1.3" height="5" fill="#666"/><rect x="579.69" y="148.6" width="1.3" height="1.4" fill="#6a6a6a"/><rect x="586.66" y="148.6" width="1.3" height="1.4" fill="#6a6a6a"/><rect x="593.63" y="148.6" width="1.3" height="1.4" fill="#6a6a6a"/><rect x="600.60" y="148.6" width="1.3" height="1.4" fill="#6a6a6a"/><rect x="607.62" y="147.3" width="1.3" height="2.7" fill="#666"/><rect x="614.53" y="148.6" width="1.3" height="1.4" fill="#6a6a6a"/><rect x="621.50" y="148.6" width="1.3" height="1.4" fill="#6a6a6a"/><rect x="628.47" y="148.6" width="1.3" height="1.4" fill="#6a6a6a"/><rect x="635.44" y="148.6" width="1.3" height="1.4" fill="#6a6a6a"/><rect x="642.46" y="145" width="1.3" height="5" fill="#666"/><rect x="649.38" y="148.6" width="1.3" height="1.4" fill="#6a6a6a"/><rect x="656.35" y="148.6" width="1.3" height="1.4" fill="#6a6a6a"/><rect x="663.32" y="148.6" width="1.3" height="1.4" fill="#6a6a6a"/><rect x="670.29" y="148.6" width="1.3" height="1.4" fill="#6a6a6a"/><rect x="677.30" y="147.3" width="1.3" height="2.7" fill="#666"/><rect x="684.22" y="148.6" width="1.3" height="1.4" fill="#6a6a6a"/><rect x="691.19" y="148.6" width="1.3" height="1.4" fill="#6a6a6a"/><rect x="698.16" y="148.6" width="1.3" height="1.4" fill="#6a6a6a"/><rect x="705.13" y="148.6" width="1.3" height="1.4" fill="#6a6a6a"/><rect x="712.15" y="145" width="1.3" height="5" fill="#666"/><rect x="719.07" y="148.6" width="1.3" height="1.4" fill="#6a6a6a"/><rect x="726.04" y="148.6" width="1.3" height="1.4" fill="#6a6a6a"/><rect x="733.01" y="148.6" width="1.3" height="1.4" fill="#6a6a6a"/><rect x="739.98" y="148.6" width="1.3" height="1.4" fill="#6a6a6a"/><rect x="747.00" y="147.3" width="1.3" height="2.7" fill="#666"/><rect x="753.91" y="148.6" width="1.3" height="1.4" fill="#6a6a6a"/><rect x="760.88" y="148.6" width="1.3" height="1.4" fill="#6a6a6a"/><rect x="767.85" y="148.6" width="1.3" height="1.4" fill="#6a6a6a"/><rect x="774.82" y="148.6" width="1.3" height="1.4" fill="#6a6a6a"/><rect x="781.84" y="145" width="1.3" height="5" fill="#666"/><rect x="788.76" y="148.6" width="1.3" height="1.4" fill="#6a6a6a"/><rect x="795.73" y="148.6" width="1.3" height="1.4" fill="#6a6a6a"/><rect x="802.70" y="148.6" width="1.3" height="1.4" fill="#6a6a6a"/><rect x="809.67" y="148.6" width="1.3" height="1.4" fill="#6a6a6a"/><rect x="816.69" y="147.3" width="1.3" height="2.7" fill="#666"/><rect x="823.60" y="148.6" width="1.3" height="1.4" fill="#6a6a6a"/><rect x="830.57" y="148.6" width="1.3" height="1.4" fill="#6a6a6a"/><rect x="837.54" y="148.6" width="1.3" height="1.4" fill="#6a6a6a"/><rect x="844.51" y="148.6" width="1.3" height="1.4" fill="#6a6a6a"/><rect x="851.53" y="145" width="1.3" height="5" fill="#666"/><rect x="858.45" y="148.6" width="1.3" height="1.4" fill="#6a6a6a"/><rect x="865.42" y="148.6" width="1.3" height="1.4" fill="#6a6a6a"/><rect x="872.39" y="148.6" width="1.3" height="1.4" fill="#6a6a6a"/><rect x="879.36" y="148.6" width="1.3" height="1.4" fill="#6a6a6a"/><rect x="886.38" y="147.3" width="1.3" height="2.7" fill="#666"/><rect x="893.29" y="148.6" width="1.3" height="1.4" fill="#6a6a6a"/><rect x="900.26" y="148.6" width="1.3" height="1.4" fill="#6a6a6a"/><rect x="907.23" y="148.6" width="1.3" height="1.4" fill="#6a6a6a"/><rect x="914.20" y="148.6" width="1.3" height="1.4" fill="#6a6a6a"/><rect x="921.22" y="145" width="1.3" height="5" fill="#666"/><rect x="928.14" y="148.6" width="1.3" height="1.4" fill="#6a6a6a"/><rect x="935.11" y="148.6" width="1.3" height="1.4" fill="#6a6a6a"/><rect x="942.08" y="148.6" width="1.3" height="1.4" fill="#6a6a6a"/><rect x="949.05" y="148.6" width="1.3" height="1.4" fill="#6a6a6a"/><rect x="956.06" y="147.3" width="1.3" height="2.7" fill="#666"/><rect x="962.98" y="148.6" width="1.3" height="1.4" fill="#6a6a6a"/><rect x="969.95" y="148.6" width="1.3" height="1.4" fill="#6a6a6a"/><rect x="976.92" y="148.6" width="1.3" height="1.4" fill="#6a6a6a"/><rect x="983.89" y="148.6" width="1.3" height="1.4" fill="#6a6a6a"/><rect x="990.91" y="145" width="1.3" height="5" fill="#666"/><rect x="997.83" y="148.6" width="1.3" height="1.4" fill="#6a6a6a"/><rect x="1004.80" y="148.6" width="1.3" height="1.4" fill="#6a6a6a"/><rect x="1011.77" y="148.6" width="1.3" height="1.4" fill="#6a6a6a"/><rect x="1018.74" y="148.6" width="1.3" height="1.4" fill="#6a6a6a"/><rect x="1025.76" y="147.3" width="1.3" height="2.7" fill="#666"/><rect x="1032.67" y="148.6" width="1.3" height="1.4" fill="#6a6a6a"/><rect x="1039.64" y="148.6" width="1.3" height="1.4" fill="#6a6a6a"/><rect x="1046.61" y="148.6" width="1.3" height="1.4" fill="#6a6a6a"/><rect x="1053.58" y="148.6" width="1.3" height="1.4" fill="#6a6a6a"/><rect x="1060.60" y="145" width="1.3" height="5" fill="#666"/><rect x="1067.52" y="148.6" width="1.3" height="1.4" fill="#6a6a6a"/><rect x="1074.49" y="148.6" width="1.3" height="1.4" fill="#6a6a6a"/><rect x="1081.46" y="148.6" width="1.3" height="1.4" fill="#6a6a6a"/><rect x="1088.43" y="148.6" width="1.3" height="1.4" fill="#6a6a6a"/><rect x="1095.45" y="147.3" width="1.3" height="2.7" fill="#666"/><rect x="1102.36" y="148.6" width="1.3" height="1.4" fill="#6a6a6a"/><rect x="1109.33" y="148.6" width="1.3" height="1.4" fill="#6a6a6a"/><rect x="1116.30" y="148.6" width="1.3" height="1.4" fill="#6a6a6a"/><rect x="1123.27" y="148.6" width="1.3" height="1.4" fill="#6a6a6a"/><rect x="1130.29" y="145" width="1.3" height="5" fill="#666"/><rect x="1137.21" y="148.6" width="1.3" height="1.4" fill="#6a6a6a"/><rect x="1144.18" y="148.6" width="1.3" height="1.4" fill="#6a6a6a"/><rect x="1151.15" y="148.6" width="1.3" height="1.4" fill="#6a6a6a"/><rect x="1158.12" y="148.6" width="1.3" height="1.4" fill="#6a6a6a"/><rect x="1165.14" y="147.3" width="1.3" height="2.7" fill="#666"/><rect x="1172.05" y="148.6" width="1.3" height="1.4" fill="#6a6a6a"/><rect x="1179.02" y="148.6" width="1.3" height="1.4" fill="#6a6a6a"/><rect x="1185.99" y="148.6" width="1.3" height="1.4" fill="#6a6a6a"/><rect x="1192.96" y="148.6" width="1.3" height="1.4" fill="#6a6a6a"/><rect x="1199.98" y="145" width="1.3" height="5" fill="#666"/><rect x="1206.90" y="148.6" width="1.3" height="1.4" fill="#6a6a6a"/><rect x="1213.87" y="148.6" width="1.3" height="1.4" fill="#6a6a6a"/><rect x="1220.84" y="148.6" width="1.3" height="1.4" fill="#6a6a6a"/><rect x="1227.81" y="148.6" width="1.3" height="1.4" fill="#6a6a6a"/><rect x="1234.83" y="147.3" width="1.3" height="2.7" fill="#666"/><rect x="1241.74" y="148.6" width="1.3" height="1.4" fill="#6a6a6a"/><rect x="1248.71" y="148.6" width="1.3" height="1.4" fill="#6a6a6a"/><rect x="1255.68" y="148.6" width="1.3" height="1.4" fill="#6a6a6a"/><rect x="1262.65" y="148.6" width="1.3" height="1.4" fill="#6a6a6a"/><rect x="1269.67" y="145" width="1.3" height="5" fill="#666"/><rect x="1276.59" y="148.6" width="1.3" height="1.4" fill="#6a6a6a"/><rect x="1283.56" y="148.6" width="1.3" height="1.4" fill="#6a6a6a"/><rect x="1290.53" y="148.6" width="1.3" height="1.4" fill="#6a6a6a"/><rect x="1297.50" y="148.6" width="1.3" height="1.4" fill="#6a6a6a"/><rect x="1304.52" y="147.3" width="1.3" height="2.7" fill="#666"/><rect x="1311.43" y="148.6" width="1.3" height="1.4" fill="#6a6a6a"/><path d="M916.5 135V151" stroke="#000" stroke-width="1.4" stroke-dasharray="3 3"/></svg>
<div style="left:48px;top:151px;width:1275px;height:1px;background:#8c8c8c;"></div>
<div class="t" style="left:77.74px;top:133.9px;font-size:9.6px;line-height:11px;color:#8a8a8a;width:15.6px;text-align:center;letter-spacing:-0.55px;text-indent:0.55px;">40</div>
<div class="t" style="left:147.43px;top:133.9px;font-size:9.6px;line-height:11px;color:#8a8a8a;width:15.6px;text-align:center;letter-spacing:-0.55px;text-indent:0.55px;">30</div>
<div class="t" style="left:217.12px;top:133.9px;font-size:9.6px;line-height:11px;color:#8a8a8a;width:15.6px;text-align:center;letter-spacing:-0.55px;text-indent:0.55px;">20</div>
<div class="t" style="left:286.81px;top:133.9px;font-size:9.6px;line-height:11px;color:#8a8a8a;width:15.6px;text-align:center;letter-spacing:-0.55px;text-indent:0.55px;">10</div>
<div class="t" style="left:358.90px;top:133.9px;font-size:9.6px;line-height:11px;color:#8a8a8a;width:10.8px;text-align:center;letter-spacing:-0.55px;text-indent:0.55px;">0</div>
<div class="t" style="left:426.19px;top:133.9px;font-size:9.6px;line-height:11px;color:#8a8a8a;width:15.6px;text-align:center;letter-spacing:-0.55px;text-indent:0.55px;">10</div>
<div class="t" style="left:495.88px;top:133.9px;font-size:9.6px;line-height:11px;color:#8a8a8a;width:15.6px;text-align:center;letter-spacing:-0.55px;text-indent:0.55px;">20</div>
<div class="t" style="left:565.57px;top:133.9px;font-size:9.6px;line-height:11px;color:#8a8a8a;width:15.6px;text-align:center;letter-spacing:-0.55px;text-indent:0.55px;">30</div>
<div class="t" style="left:635.26px;top:133.9px;font-size:9.6px;line-height:11px;color:#8a8a8a;width:15.6px;text-align:center;letter-spacing:-0.55px;text-indent:0.55px;">40</div>
<div class="t" style="left:704.95px;top:133.9px;font-size:9.6px;line-height:11px;color:#8a8a8a;width:15.6px;text-align:center;letter-spacing:-0.55px;text-indent:0.55px;">50</div>
<div class="t" style="left:774.64px;top:133.9px;font-size:9.6px;line-height:11px;color:#8a8a8a;width:15.6px;text-align:center;letter-spacing:-0.55px;text-indent:0.55px;">60</div>
<div class="t" style="left:844.33px;top:133.9px;font-size:9.6px;line-height:11px;color:#8a8a8a;width:15.6px;text-align:center;letter-spacing:-0.55px;text-indent:0.55px;">70</div>
<div class="t" style="left:914.02px;top:133.9px;font-size:9.6px;line-height:11px;color:#8a8a8a;width:15.6px;text-align:center;letter-spacing:-0.55px;text-indent:0.55px;">80</div>
<div class="t" style="left:983.71px;top:133.9px;font-size:9.6px;line-height:11px;color:#8a8a8a;width:15.6px;text-align:center;letter-spacing:-0.55px;text-indent:0.55px;">90</div>
<div class="t" style="left:1051.00px;top:133.9px;font-size:9.6px;line-height:11px;color:#8a8a8a;width:20.4px;text-align:center;letter-spacing:-0.55px;text-indent:0.55px;">100</div>
<div class="t" style="left:1120.69px;top:133.9px;font-size:9.6px;line-height:11px;color:#8a8a8a;width:20.4px;text-align:center;letter-spacing:-0.55px;text-indent:0.55px;">110</div>
<div class="t" style="left:1190.38px;top:133.9px;font-size:9.6px;line-height:11px;color:#8a8a8a;width:20.4px;text-align:center;letter-spacing:-0.55px;text-indent:0.55px;">120</div>
<div class="t" style="left:1274px;top:136.66px;font-size:9.5px;line-height:11px;color:#888;letter-spacing:-0.05px;">millimeters</div>
<svg style="left:0px;top:0px;pointer-events:none;" width="1366" height="768" viewBox="0 0 1366 768"><rect x="45.6" y="663.61" width="1.4" height="1.3" fill="#6a6a6a"/><rect x="45.6" y="656.63" width="1.4" height="1.3" fill="#6a6a6a"/><rect x="42" y="649.70" width="5" height="1.3" fill="#666"/><rect x="45.6" y="642.67" width="1.4" height="1.3" fill="#6a6a6a"/><rect x="45.6" y="635.69" width="1.4" height="1.3" fill="#6a6a6a"/><rect x="45.6" y="628.71" width="1.4" height="1.3" fill="#6a6a6a"/><rect x="45.6" y="621.73" width="1.4" height="1.3" fill="#6a6a6a"/><rect x="44.3" y="614.80" width="2.7" height="1.3" fill="#666"/><rect x="45.6" y="607.77" width="1.4" height="1.3" fill="#6a6a6a"/><rect x="45.6" y="600.79" width="1.4" height="1.3" fill="#6a6a6a"/><rect x="45.6" y="593.81" width="1.4" height="1.3" fill="#6a6a6a"/><rect x="45.6" y="586.83" width="1.4" height="1.3" fill="#6a6a6a"/><rect x="42" y="579.90" width="5" height="1.3" fill="#666"/><rect x="45.6" y="572.87" width="1.4" height="1.3" fill="#6a6a6a"/><rect x="45.6" y="565.89" width="1.4" height="1.3" fill="#6a6a6a"/><rect x="45.6" y="558.91" width="1.4" height="1.3" fill="#6a6a6a"/><rect x="45.6" y="551.93" width="1.4" height="1.3" fill="#6a6a6a"/><rect x="44.3" y="545.00" width="2.7" height="1.3" fill="#666"/><rect x="45.6" y="537.97" width="1.4" height="1.3" fill="#6a6a6a"/><rect x="45.6" y="530.99" width="1.4" height="1.3" fill="#6a6a6a"/><rect x="45.6" y="524.01" width="1.4" height="1.3" fill="#6a6a6a"/><rect x="45.6" y="517.03" width="1.4" height="1.3" fill="#6a6a6a"/><rect x="42" y="510.10" width="5" height="1.3" fill="#666"/><rect x="45.6" y="503.07" width="1.4" height="1.3" fill="#6a6a6a"/><rect x="45.6" y="496.09" width="1.4" height="1.3" fill="#6a6a6a"/><rect x="45.6" y="489.11" width="1.4" height="1.3" fill="#6a6a6a"/><rect x="45.6" y="482.13" width="1.4" height="1.3" fill="#6a6a6a"/><rect x="44.3" y="475.20" width="2.7" height="1.3" fill="#666"/><rect x="45.6" y="468.17" width="1.4" height="1.3" fill="#6a6a6a"/><rect x="45.6" y="461.19" width="1.4" height="1.3" fill="#6a6a6a"/><rect x="45.6" y="454.21" width="1.4" height="1.3" fill="#6a6a6a"/><rect x="45.6" y="447.23" width="1.4" height="1.3" fill="#6a6a6a"/><rect x="42" y="440.30" width="5" height="1.3" fill="#666"/><rect x="45.6" y="433.27" width="1.4" height="1.3" fill="#6a6a6a"/><rect x="45.6" y="426.29" width="1.4" height="1.3" fill="#6a6a6a"/><rect x="45.6" y="419.31" width="1.4" height="1.3" fill="#6a6a6a"/><rect x="45.6" y="412.33" width="1.4" height="1.3" fill="#6a6a6a"/><rect x="44.3" y="405.40" width="2.7" height="1.3" fill="#666"/><rect x="45.6" y="398.37" width="1.4" height="1.3" fill="#6a6a6a"/><rect x="45.6" y="391.39" width="1.4" height="1.3" fill="#6a6a6a"/><rect x="45.6" y="384.41" width="1.4" height="1.3" fill="#6a6a6a"/><rect x="45.6" y="377.43" width="1.4" height="1.3" fill="#6a6a6a"/><rect x="42" y="370.50" width="5" height="1.3" fill="#666"/><rect x="45.6" y="363.47" width="1.4" height="1.3" fill="#6a6a6a"/><rect x="45.6" y="356.49" width="1.4" height="1.3" fill="#6a6a6a"/><rect x="45.6" y="349.51" width="1.4" height="1.3" fill="#6a6a6a"/><rect x="45.6" y="342.53" width="1.4" height="1.3" fill="#6a6a6a"/><rect x="44.3" y="335.60" width="2.7" height="1.3" fill="#666"/><rect x="45.6" y="328.57" width="1.4" height="1.3" fill="#6a6a6a"/><rect x="45.6" y="321.59" width="1.4" height="1.3" fill="#6a6a6a"/><rect x="45.6" y="314.61" width="1.4" height="1.3" fill="#6a6a6a"/><rect x="45.6" y="307.63" width="1.4" height="1.3" fill="#6a6a6a"/><rect x="42" y="300.70" width="5" height="1.3" fill="#666"/><rect x="45.6" y="293.67" width="1.4" height="1.3" fill="#6a6a6a"/><rect x="45.6" y="286.69" width="1.4" height="1.3" fill="#6a6a6a"/><rect x="45.6" y="279.71" width="1.4" height="1.3" fill="#6a6a6a"/><rect x="45.6" y="272.73" width="1.4" height="1.3" fill="#6a6a6a"/><rect x="44.3" y="265.80" width="2.7" height="1.3" fill="#666"/><rect x="45.6" y="258.77" width="1.4" height="1.3" fill="#6a6a6a"/><rect x="45.6" y="251.79" width="1.4" height="1.3" fill="#6a6a6a"/><rect x="45.6" y="244.81" width="1.4" height="1.3" fill="#6a6a6a"/><rect x="45.6" y="237.83" width="1.4" height="1.3" fill="#6a6a6a"/><rect x="42" y="230.90" width="5" height="1.3" fill="#666"/><rect x="45.6" y="223.87" width="1.4" height="1.3" fill="#6a6a6a"/><rect x="45.6" y="216.89" width="1.4" height="1.3" fill="#6a6a6a"/><rect x="45.6" y="209.91" width="1.4" height="1.3" fill="#6a6a6a"/><rect x="45.6" y="202.93" width="1.4" height="1.3" fill="#6a6a6a"/><rect x="44.3" y="196.00" width="2.7" height="1.3" fill="#666"/><rect x="45.6" y="188.97" width="1.4" height="1.3" fill="#6a6a6a"/><rect x="45.6" y="181.99" width="1.4" height="1.3" fill="#6a6a6a"/><rect x="45.6" y="175.01" width="1.4" height="1.3" fill="#6a6a6a"/><rect x="45.6" y="168.03" width="1.4" height="1.3" fill="#6a6a6a"/><rect x="42" y="161.10" width="5" height="1.3" fill="#666"/><rect x="45.6" y="154.07" width="1.4" height="1.3" fill="#6a6a6a"/><path d="M32 655.5H48" stroke="#000" stroke-width="1.4" stroke-dasharray="3 3"/></svg>
<div style="left:48px;top:151px;width:1px;height:524px;background:#8c8c8c;"></div>
<div class="t" style="left:32.10px;top:573.50px;width:10.8px;font-size:9.6px;line-height:11px;color:#8a8a8a;text-align:center;letter-spacing:-0.55px;text-indent:0.55px;transform:rotate(-90deg);transform-origin:5.40px 5.5px;">0</div>
<div class="t" style="left:29.70px;top:503.70px;width:15.6px;font-size:9.6px;line-height:11px;color:#8a8a8a;text-align:center;letter-spacing:-0.55px;text-indent:0.55px;transform:rotate(-90deg);transform-origin:7.80px 5.5px;">10</div>
<div class="t" style="left:29.70px;top:433.90px;width:15.6px;font-size:9.6px;line-height:11px;color:#8a8a8a;text-align:center;letter-spacing:-0.55px;text-indent:0.55px;transform:rotate(-90deg);transform-origin:7.80px 5.5px;">20</div>
<div class="t" style="left:29.70px;top:364.10px;width:15.6px;font-size:9.6px;line-height:11px;color:#8a8a8a;text-align:center;letter-spacing:-0.55px;text-indent:0.55px;transform:rotate(-90deg);transform-origin:7.80px 5.5px;">30</div>
<div class="t" style="left:29.70px;top:294.30px;width:15.6px;font-size:9.6px;line-height:11px;color:#8a8a8a;text-align:center;letter-spacing:-0.55px;text-indent:0.55px;transform:rotate(-90deg);transform-origin:7.80px 5.5px;">40</div>
<div class="t" style="left:29.70px;top:224.50px;width:15.6px;font-size:9.6px;line-height:11px;color:#8a8a8a;text-align:center;letter-spacing:-0.55px;text-indent:0.55px;transform:rotate(-90deg);transform-origin:7.80px 5.5px;">50</div>
<div class="t" style="left:29.70px;top:154.70px;width:15.6px;font-size:9.6px;line-height:11px;color:#8a8a8a;text-align:center;letter-spacing:-0.55px;text-indent:0.55px;transform:rotate(-90deg);transform-origin:7.80px 5.5px;">60</div>
<div class="t" style="left:11.5px;top:641.5px;width:52px;font-size:9.5px;line-height:11px;color:#888;text-align:center;transform:rotate(-90deg);transform-origin:26px 5.5px;">millimeters</div>
<div style="left:49px;top:152px;width:1274px;height:505px;background:#fff;"></div>
<div style="left:48px;top:657px;width:639px;height:1px;background:#a0a0a0;"></div>
<div style="left:370px;top:581px;width:628px;height:4px;background:#c6c3c3;"></div>
<div style="left:992px;top:236px;width:6px;height:349px;background:#c6c3c3;"></div>
<svg style="left:0px;top:0px;pointer-events:none;" width="1366" height="768" viewBox="0 0 1366 768"><path d="M364.6 580.6V231.3H991.6V580.6" fill="none" stroke="#1e1e1e" stroke-width="1.5"/><path d="M364.6 454.5C399.6 485.7 441.2 513.2 487.9 513.2C610 513.2 780 428 991.6 436V579.9H364.6Z" fill="#07d6aa" stroke="#0d1a17" stroke-width="1.3"/><path d="M364.6 579.9H991.6" stroke="#0a1412" stroke-width="1.6"/></svg>
<div style="left:362px;top:451px;width:5px;height:6px;background:#fff;border:1px solid #000;"></div>
<div style="left:362px;top:577px;width:5px;height:5px;background:#fff;border:1px solid #000;"></div>
<div style="left:988px;top:577px;width:5px;height:5px;background:#fff;border:1px solid #000;"></div>
<div style="left:353px;top:428px;width:7px;height:7px;background:#000;"></div>
<div style="left:353px;top:505px;width:7px;height:7px;background:#000;"></div>
<div style="left:353px;top:583px;width:7px;height:7px;background:#000;"></div>
<div style="left:673px;top:583px;width:7px;height:7px;background:#000;"></div>
<div style="left:994px;top:583px;width:7px;height:7px;background:#000;"></div>
<div style="left:1306px;top:152px;width:16px;height:17px;background:#f0f0f0;"></div>
<svg style="left:1310px;top:157px;" width="9" height="6" viewBox="0 0 9 6"><path d="M0.8 5L4.5 1.2L8.2 5" fill="none" stroke="#444" stroke-width="1.8"/></svg>
<div style="left:1306px;top:256px;width:15px;height:297px;background:#cdcdcd;"></div>
<div style="left:1306px;top:640px;width:16px;height:17px;background:#f0f0f0;"></div>
<svg style="left:1310px;top:645px;" width="9" height="6" viewBox="0 0 9 6"><path d="M0.8 1L4.5 4.8L8.2 1" fill="none" stroke="#444" stroke-width="1.8"/></svg>
<div style="left:49px;top:658px;width:638px;height:17px;background:#f2f2f2;"></div>
<svg style="left:52px;top:660px;" width="10" height="12" viewBox="0 0 10 12"><path d="M0.5 0.5H6L8.5 3V11.5H0.5Z" fill="#fff" stroke="#111" stroke-width="1"/><path d="M4.5 5V10M2 7.5H7" stroke="#111" stroke-width="1.2"/></svg>
<svg style="left:70px;top:662px;" width="8" height="7" viewBox="0 0 8 7"><rect x="0" y="0" width="1.3" height="7" fill="#888"/><path d="M7 0V7L2.5 3.5Z" fill="#888"/></svg>
<svg style="left:88.5px;top:662px;" width="6" height="7" viewBox="0 0 6 7"><path d="M6 0V7L0.5 3.5Z" fill="#888"/></svg>
<div class="t" style="left:115.8px;top:659.63px;font-size:12px;line-height:14px;color:#111;letter-spacing:-0.45px;">1 of 1</div>
<svg style="left:166.5px;top:662px;" width="6" height="7" viewBox="0 0 6 7"><path d="M0 0V7L5.5 3.5Z" fill="#888"/></svg>
<svg style="left:182px;top:662px;" width="8" height="7" viewBox="0 0 8 7"><path d="M0 0V7L4.5 3.5Z" fill="#888"/><rect x="5.7" y="0" width="1.3" height="7" fill="#888"/></svg>
<svg style="left:198px;top:660px;" width="10" height="12" viewBox="0 0 10 12"><path d="M0.5 0.5H6L8.5 3V11.5H0.5Z" fill="#fff" stroke="#111" stroke-width="1"/><path d="M4.5 5V10M2 7.5H7" stroke="#111" stroke-width="1.2"/></svg>
<div style="left:212px;top:658px;width:1px;height:17px;background:#9a9a9a;"></div>
<svg style="left:212px;top:657.5px;" width="70" height="18" viewBox="0 0 70 18"><path d="M1 0V17.5H66V9L59 0.5" fill="#fff" stroke="#a8a8a8" stroke-width="1"/></svg>
<div class="t" style="left:227.5px;top:658.43px;font-size:12px;line-height:14px;color:#111;letter-spacing:-0.5px;">Page 1</div>
<div style="left:686px;top:658px;width:1px;height:17px;background:#8a8a8a;"></div>
<svg style="left:681px;top:661px;" width="3" height="11" viewBox="0 0 3 11"><circle cx="1.5" cy="1.5" r="0.8" fill="#aaa"/><circle cx="1.5" cy="5" r="0.8" fill="#aaa"/><circle cx="1.5" cy="8.5" r="0.8" fill="#aaa"/></svg>
<div style="left:687px;top:658px;width:636px;height:17px;background:#fff;"></div>
<div style="left:688px;top:658px;width:16px;height:17px;background:#f0f0f0;"></div>
<svg style="left:693px;top:662px;" width="6" height="9" viewBox="0 0 6 9"><path d="M5 0.8L1.2 4.5L5 8.2" fill="none" stroke="#444" stroke-width="1.8"/></svg>
<div style="left:753px;top:658px;width:486px;height:15px;background:#cdcdcd;"></div>
<div style="left:1288px;top:658px;width:17px;height:17px;background:#f0f0f0;"></div>
<svg style="left:1294px;top:662px;" width="6" height="9" viewBox="0 0 6 9"><path d="M1 0.8L4.8 4.5L1 8.2" fill="none" stroke="#444" stroke-width="1.8"/></svg>
<svg style="left:1308px;top:660px;" width="13" height="13" viewBox="0 0 13 13"><circle cx="5" cy="5" r="4.3" fill="#fff" stroke="#3a3d55" stroke-width="1.3"/><circle cx="5" cy="5" r="1.6" fill="none" stroke="#3a3d55" stroke-width="1"/><path d="M8 8L12 12" stroke="#222" stroke-width="2"/></svg>
<div style="left:1322px;top:152px;width:1px;height:523px;background:#e0e0e0;"></div>
<div style="left:30px;top:675px;width:1293px;height:19px;background:#f2f2f2;border-top:1px solid #dadada;"></div>
<svg style="left:34px;top:680px;" width="3" height="11" viewBox="0 0 3 11"><circle cx="1.5" cy="1.5" r="0.8" fill="#aaa"/><circle cx="1.5" cy="5" r="0.8" fill="#aaa"/><circle cx="1.5" cy="8.5" r="0.8" fill="#aaa"/></svg>
<svg style="left:42px;top:680px;" width="6" height="9" viewBox="0 0 6 9"><path d="M0 0V9L5.5 4.5Z" fill="#000"/></svg>
<svg style="left:54px;top:679px;" width="13" height="13" viewBox="0 0 13 13"><path d="M1 12L8 5" stroke="#6a6e80" stroke-width="2"/><path d="M6.5 3L10 6.5L12.5 4L9 0.5Z" fill="#2a2c3a"/></svg>
<svg style="left:73px;top:681px;" width="5" height="8" viewBox="0 0 5 8"><path d="M4.5 0.5L1 4L4.5 7.5" fill="none" stroke="#c8c8c8" stroke-width="1.2"/></svg>
<svg style="left:83.5px;top:676.5px;" width="18" height="17" viewBox="0 0 18 17"><rect x="0.5" y="0.5" width="17" height="16" fill="#fff" stroke="#444" stroke-width="1"/><path d="M1 1L17 16M17 1L1 16" stroke="#333" stroke-width="0.9"/></svg>
<div class="t" style="left:521px;top:677.73px;font-size:11.5px;line-height:14px;color:#a8a8a8;font-style:italic;letter-spacing:0px;">Drag colors (or objects) here to store these colors with your document</div>
<svg style="left:1289px;top:682px;" width="6" height="9" viewBox="0 0 6 9"><path d="M1 0.5L5 4.5L1 8.5" fill="none" stroke="#c8c8c8" stroke-width="1.3"/></svg>
<svg style="left:1304px;top:682px;" width="8" height="7" viewBox="0 0 8 7"><path d="M0.5 0.5L3.5 3.5L0.5 6.5M4 0.5L7 3.5L4 6.5" fill="none" stroke="#b8b8b8" stroke-width="1"/></svg>
<div style="left:1323px;top:112px;width:43px;height:616px;background:#f0f0f0;"></div>
<div style="left:1323px;top:112px;width:3px;height:582px;background:#fff;"></div>
<div style="left:1325px;top:112px;width:1px;height:582px;background:#d9d9d9;"></div>
<div style="left:1326px;top:112px;width:22px;height:582px;background:#eeeeee;"></div>
<div style="left:1326px;top:112px;width:2px;height:582px;background:#fafafa;"></div>
<div style="left:1328px;top:113px;width:20px;height:19px;background:#e8e8e8;"></div>
<svg style="left:1332px;top:117px;" width="10" height="10" viewBox="0 0 10 10"><path d="M1 1L9 9M9 1L1 9" stroke="#b0b0b0" stroke-width="1.1"/></svg>
<div style="left:1328px;top:132px;width:20px;height:70px;background:#d9d9d9;"></div>
<div style="left:1328px;top:203px;width:20px;height:135px;background:#d9d9d9;"></div>
<div style="left:1328px;top:339px;width:20px;height:127px;background:#d9d9d9;"></div>
<div style="left:1328px;top:468px;width:20px;height:124px;background:#b9b9b9;"></div>
<div style="left:1328px;top:593px;width:20px;height:26px;background:#d9d9d9;"></div>
<svg style="left:1330px;top:137px;" width="15" height="15" viewBox="0 0 15 15"><path d="M1 1V10L3 8.2L5 12L6.5 11.2L4.8 7.5H7.5Z" fill="#fff" stroke="#444" stroke-width="1"/><path d="M9.5 1H14V5M12 3.5L9 6.5" fill="none" stroke="#333" stroke-width="1.2"/><rect x="10" y="8" width="3" height="3" fill="#555"/></svg>
<div class="t" style="left:1323.9px;top:162.5px;width:27px;height:14px;font-size:12.3px;line-height:14px;color:#111;transform:rotate(90deg);letter-spacing:-0.1px;">Hints</div>
<svg style="left:1330px;top:209px;" width="15" height="15" viewBox="0 0 15 15"><rect x="4" y="3" width="10" height="10" fill="#8f92b5" stroke="#555" stroke-width="0.8"/><circle cx="9" cy="8" r="2.5" fill="#c4c6dc"/><path d="M0.5 7L4 3.5L6 6.5L3 9Z" fill="#f4c84a"/></svg>
<div class="t" style="left:1294.4px;top:264.6px;width:86px;height:14px;font-size:12.3px;line-height:14px;color:#111;transform:rotate(90deg);letter-spacing:-0.28px;">Object Properties</div>
<svg style="left:1329px;top:342px;" width="17" height="17" viewBox="0 0 17 17"><path d="M3.8 3.4H6M2.3 5V15M7 14.4H11.7" stroke="#666" stroke-width="0.9" stroke-dasharray="1 0.8"/><rect x="6" y="1" width="4.5" height="5" rx="0.6" fill="#70707e"/><rect x="7" y="7" width="4" height="4" fill="#dcdce6" stroke="#888" stroke-width="0.6"/><rect x="11.5" y="4.5" width="3.5" height="7" rx="0.5" fill="#80808e"/><circle cx="2.3" cy="3.4" r="1.5" fill="#fff" stroke="#555" stroke-width="0.9"/><circle cx="13.2" cy="14.4" r="1.5" fill="#fff" stroke="#555" stroke-width="0.9"/></svg>
<div class="t" style="left:1297.4px;top:396.2px;width:80px;height:14px;font-size:12.3px;line-height:14px;color:#111;transform:rotate(90deg);letter-spacing:-0.25px;">Object Manager</div>
<svg style="left:1330.5px;top:472.5px;" width="15" height="15" viewBox="0 0 15 15"><path d="M7.5 0.8L9.6 5.2L14.3 5.7L10.8 8.9L11.7 13.6L7.5 11.3L3.3 13.6L4.2 8.9L0.7 5.7L5.4 5.2Z" fill="#f4f4f4" stroke="#6a6a6a" stroke-width="1"/></svg>
<div class="t" style="left:1296.9px;top:525.0px;width:81px;height:14px;font-size:12.3px;line-height:14px;color:#111;transform:rotate(90deg);letter-spacing:-0.3px;">Insert Character</div>
<svg style="left:1331px;top:597px;" width="12" height="17" viewBox="0 0 12 17"><path d="M3 1V16M3 4H11" stroke="#8a8a9a" stroke-width="1" stroke-dasharray="1.2 1"/></svg>
<svg style="left:1330px;top:638px;" width="16" height="16" viewBox="0 0 16 16"><circle cx="8" cy="8" r="7" fill="none" stroke="#c9c9c9" stroke-width="1.2"/><path d="M8 3V13M3 8H13" stroke="#c9c9c9" stroke-width="1.8"/></svg>
<div style="left:1348px;top:112px;width:18px;height:616px;background:#f0f0f0;"></div>
<svg style="left:1352px;top:118px;" width="9" height="3" viewBox="0 0 9 3"><circle cx="1" cy="1" r="0.8" fill="#999"/><circle cx="4.5" cy="1" r="0.8" fill="#999"/><circle cx="8" cy="1" r="0.8" fill="#999"/></svg>
<svg style="left:1353px;top:123px;" width="7" height="10" viewBox="0 0 7 10"><path d="M0 0V10L6.5 5Z" fill="#000"/></svg>
<svg style="left:1350px;top:137px;" width="12" height="12" viewBox="0 0 12 12"><path d="M1 11L7 5" stroke="#cfcfcf" stroke-width="2"/><path d="M6 3L9 6L11 4L8 1Z" fill="#c8c8c8"/></svg>
<svg style="left:1352px;top:154px;" width="8" height="5" viewBox="0 0 8 5"><path d="M0.5 4.5L4 1L7.5 4.5" fill="none" stroke="#d0d0d0" stroke-width="1"/></svg>
<svg style="left:1348px;top:166px;" width="17" height="17" viewBox="0 0 17 17"><rect x="0.5" y="0.5" width="16.5" height="16" fill="#fff" stroke="#333" stroke-width="1"/><path d="M1 1L17 16.5M17 1L1 16.5" stroke="#222" stroke-width="0.9"/></svg>
<div style="left:1348px;top:183px;width:17px;height:17px;background:#2b1f1b;"></div>
<div style="left:1348px;top:200px;width:17px;height:17px;background:#3f3b3b;"></div>
<div style="left:1348px;top:217px;width:17px;height:17px;background:#585656;"></div>
<div style="left:1348px;top:234px;width:17px;height:17px;background:#6e6d6d;"></div>
<div style="left:1348px;top:251px;width:17px;height:17px;background:#868585;"></div>
<div style="left:1348px;top:268px;width:17px;height:17px;background:#9c9b9b;"></div>
<div style="left:1348px;top:285px;width:17px;height:17px;background:#b2b1b1;"></div>
<div style="left:1348px;top:302px;width:17px;height:17px;background:#c8c7c7;"></div>
<div style="left:1348px;top:319px;width:17px;height:17px;background:#dcdcdc;"></div>
<div style="left:1348px;top:336px;width:17px;height:17px;background:#ededed;"></div>
<div style="left:1348px;top:353px;width:17px;height:17px;background:#ffffff;"></div>
<div style="left:1348px;top:370px;width:17px;height:17px;background:#1d2a8f;"></div>
<div style="left:1348px;top:387px;width:17px;height:17px;background:#0ea0e0;"></div>
<div style="left:1348px;top:404px;width:17px;height:17px;background:#13984a;"></div>
<div style="left:1348px;top:421px;width:17px;height:17px;background:#ffea00;"></div>
<div style="left:1348px;top:438px;width:17px;height:17px;background:#e30a17;"></div>
<div style="left:1348px;top:455px;width:17px;height:17px;background:#e4007f;"></div>
<div style="left:1348px;top:472px;width:17px;height:17px;background:#a54391;"></div>
<div style="left:1348px;top:489px;width:17px;height:17px;background:#f18800;"></div>
<div style="left:1348px;top:506px;width:17px;height:17px;background:#f5b4b6;"></div>
<div style="left:1348px;top:523px;width:17px;height:17px;background:#8b7566;"></div>
<div style="left:1348px;top:540px;width:17px;height:17px;background:#d4d1e9;"></div>
<div style="left:1348px;top:557px;width:17px;height:17px;background:#a99ccc;"></div>
<div style="left:1348px;top:574px;width:17px;height:17px;background:#6c8ccb;"></div>
<div style="left:1348px;top:591px;width:17px;height:17px;background:#6c5fa7;"></div>
<div style="left:1348px;top:608px;width:17px;height:17px;background:#8d80b4;"></div>
<div style="left:1348px;top:625px;width:17px;height:17px;background:#4c6aa6;"></div>
<div style="left:1348px;top:642px;width:17px;height:12.5px;background:#53507c;"></div>
<div style="left:1348px;top:591px;width:17px;height:17px;border:1px solid #fff;background:#333;"></div>
<div style="left:1350px;top:593px;width:14px;height:14px;background:#7466b0;"></div>
<svg style="left:1353px;top:661px;" width="8" height="5" viewBox="0 0 8 5"><path d="M0.5 0.5L4 4L7.5 0.5" fill="none" stroke="#b0b0b0" stroke-width="1.1"/></svg>
<svg style="left:1353px;top:676px;" width="8" height="6" viewBox="0 0 8 6"><path d="M0.5 0.5L3 3L0.5 5.5M4 0.5L6.5 3L4 5.5" fill="none" stroke="#b0b0b0" stroke-width="1"/></svg>
<div style="left:0px;top:694px;width:1366px;height:34px;background:#f2f2f2;"></div>
<div style="left:0px;top:694px;width:1366px;height:1px;background:#d9d9d9;"></div>
<div class="t" style="left:5.7px;top:705.04px;font-size:11px;line-height:13px;color:#111;letter-spacing:0px;">( 79,097; -10,102 )</div>
<div style="left:105px;top:704px;width:15px;height:15px;background:#fff;border:1.2px solid #111;"></div>
<svg style="left:109.5px;top:707px;" width="6" height="9" viewBox="0 0 6 9"><path d="M0 0V9L5.5 4.5Z" fill="#000"/></svg>
<div class="t" style="left:158.5px;top:705.12px;font-size:11.2px;line-height:13px;color:#111;letter-spacing:0.05px;">Curve on Layer 1</div>
<svg style="left:912px;top:704px;" width="16" height="15" viewBox="0 0 16 15"><defs><linearGradient id="scr" x1="0" y1="0" x2="0" y2="1"><stop offset="0" stop-color="#d2a4a4"/><stop offset="0.45" stop-color="#e6d6d6"/><stop offset="0.55" stop-color="#8fb48f"/><stop offset="0.62" stop-color="#a8c0dc"/><stop offset="1" stop-color="#9cb0d4"/></linearGradient></defs><rect x="0.6" y="0.6" width="14.8" height="11.5" rx="1.2" fill="url(#scr)" stroke="#5a5e7a" stroke-width="1.1"/><circle cx="7.5" cy="6.2" r="2.6" fill="#fff" stroke="#111" stroke-width="1.3"/><rect x="3.5" y="13.6" width="8.5" height="1.2" fill="#5a5e7a"/></svg>
<svg style="left:940px;top:703px;" width="17" height="16" viewBox="0 0 17 16"><path d="M6 1L9 4" stroke="#444" stroke-width="1.2"/><path d="M1 9L7 3L13 9L7 15Z" fill="#fff" stroke="#4a4a4a" stroke-width="1.2"/><path d="M2.5 10H11.5L7 14.3Z" fill="#e58b22"/><path d="M13 9C15 10 15.5 12 15.5 14" fill="none" stroke="#e58b22" stroke-width="1.5"/></svg>
<div style="left:962px;top:702px;width:18px;height:18px;background:#07d6aa;border:1px solid #79b8a8;"></div>
<div class="t" style="left:983.5px;top:704.94px;font-size:11px;line-height:13px;color:#111;letter-spacing:-0.05px;">R:7 G:214 B:170 (#07D6AA)</div>
<div style="left:1144px;top:701px;width:1px;height:21px;background:#d2d2d2;"></div>
<svg style="left:1153px;top:704px;" width="10" height="15" viewBox="0 0 10 15"><path d="M5 0.5L8.5 5.5L7 10.5H3L1.5 5.5Z" fill="#fff" stroke="#333" stroke-width="1.1"/><path d="M5 3.5V7" stroke="#333"/><rect x="1" y="12.5" width="8" height="2" fill="#222"/></svg>
<div style="left:1171px;top:702px;width:18px;height:18px;background:#231815;border:1px solid #8a8a8a;"></div>
<div class="t" style="left:1192.2px;top:704.94px;font-size:11px;line-height:13px;color:#111;letter-spacing:0.02px;">C:0 M:0 Y:0 K:100&nbsp; 2 px</div>
<div style="left:0px;top:728px;width:1366px;height:40px;background:#000;"></div>
<svg style="left:16px;top:740px;" width="17" height="16" viewBox="0 0 17 16"><path d="M0 2.3L7 1.3V7.5H0Z M8 1.1L16.5 0V7.5H8Z M0 8.5H7V14.7L0 13.7Z M8 8.5H16.5V16L8 14.9Z" fill="#fff"/></svg>
<svg style="left:63px;top:740px;" width="18" height="17" viewBox="0 0 18 17"><circle cx="11.5" cy="6" r="5.2" fill="none" stroke="#fff" stroke-width="1.4"/><path d="M7.8 9.7L0.8 16.2" stroke="#fff" stroke-width="1.6"/></svg>
<svg style="left:110px;top:741px;" width="20" height="14" viewBox="0 0 20 14"><rect x="3.8" y="0.7" width="12.4" height="12.6" fill="none" stroke="#fff" stroke-width="1.4"/><path d="M2 2.5H0.7V11.5H2M18 2.5H19.3V11.5H18" fill="none" stroke="#fff" stroke-width="1.4"/></svg>
<svg style="left:161px;top:737px;" width="21" height="22" viewBox="0 0 21 22"><path d="M20.5 12.5H6.5C6.8 16.5 10 18.5 13.5 18.5C16 18.5 18.5 17.7 20.2 16.5V20.5C18.5 21.4 16 22 13 22C6.5 22 2 18 2 12C2 7.5 4.5 4.5 8.5 3.5C6.8 5 6.2 6.5 6.2 8.5H14.5C14.5 5.5 12.5 3.5 9.5 3.5C3.5 3.5 0.2 7.5 0 11C1 4.5 6 0 12 0C17.5 0 21 4 21 9.5C21 10.5 20.8 11.5 20.5 12.5Z" fill="#1d86e0"/></svg>
<svg style="left:209px;top:739px;" width="22" height="18" viewBox="0 0 22 18"><path d="M0.5 1.5H7.5L9 3H21.5V17.5H0.5Z" fill="#f6d36a"/><rect x="0.5" y="5" width="21" height="12.5" fill="#fae39a"/><path d="M5 17.5V11.5H17V17.5H14V14H8V17.5Z" fill="#3d9bd6"/></svg>
<svg style="left:257px;top:736px;" width="24" height="24" viewBox="0 0 24 24"><path d="M7.5 6.5V4.5A3 3.5 0 0 1 13.5 4.5V6.5M10.5 6.5V4.5A3 3.5 0 0 1 16.5 4.5V6.5" fill="none" stroke="#fff" stroke-width="1.3"/><path d="M0 6.5H23.5V22A1.5 1.5 0 0 1 22 23.5H1.5A1.5 1.5 0 0 1 0 22Z" fill="#fff"/><rect x="6" y="9.5" width="5" height="5" fill="#f35325"/><rect x="12" y="9.5" width="5" height="5" fill="#81bc06"/><rect x="6" y="15.5" width="5" height="5" fill="#05a6f0"/><rect x="12" y="15.5" width="5" height="5" fill="#ffba08"/></svg>
<svg style="left:306px;top:738px;" width="25" height="19" viewBox="0 0 25 19"><path d="M0.5 6.5L12.5 0.5L24.5 6.5V18.5H0.5Z" fill="#fff"/><path d="M0.5 6.5L24 6.8L14 10L19 16L11 10.5L0.5 8Z" fill="#000"/></svg>
<div style="left:343px;top:728px;width:48px;height:40px;background:#333;"></div>
<div style="left:343px;top:766px;width:48px;height:2px;background:#76b9ed;"></div>
<svg style="left:355px;top:736px;" width="24" height="24" viewBox="0 0 24 24"><rect width="24" height="24" fill="#5aaa46"/><path d="M1 9L5 6L16.5 18.5L15.5 23L11 21Z" fill="#eaf6e2"/><path d="M4.5 9L14 19.5" stroke="#5aaa46" stroke-width="1.2"/><path d="M12 0.5L16 14M16 0L17.3 14M20 0L18.5 14M23.5 1.5L19.5 14" stroke="#b5e3a0" stroke-width="1.6"/><rect x="15.5" y="15" width="4" height="2.5" fill="#b5e3a0"/></svg>
<div style="left:391px;top:728px;width:1px;height:40px;background:#222;"></div>
<svg style="left:1080px;top:740px;" width="15" height="15" viewBox="0 0 15 15"><circle cx="4.8" cy="7" r="2.3" fill="none" stroke="#fff" stroke-width="1.2"/><path d="M0.8 14.5C1 11.5 2.5 10 4.8 10C7 10 8.5 11.5 8.8 14.5" fill="none" stroke="#fff" stroke-width="1.2"/><circle cx="10.5" cy="3.3" r="2.3" fill="none" stroke="#fff" stroke-width="1.2"/><path d="M7 9C7.5 7.5 8.5 6.5 10.5 6.5C12.5 6.5 14 7.8 14.3 10.5" fill="none" stroke="#fff" stroke-width="1.2"/></svg>
<svg style="left:1117px;top:744px;" width="12" height="8" viewBox="0 0 12 8"><path d="M0.7 7L6 1.5L11.3 7" fill="none" stroke="#fff" stroke-width="1.3"/></svg>
<svg style="left:1140px;top:744px;" width="15" height="9" viewBox="0 0 15 9"><rect x="0.6" y="0.6" width="12" height="7.8" fill="none" stroke="#fff" stroke-width="1.2"/><rect x="2.3" y="2.3" width="6" height="4.4" fill="#fff"/><rect x="13" y="2.8" width="1.5" height="3.4" fill="#fff"/></svg>
<svg style="left:1163px;top:742px;" width="16" height="13" viewBox="0 0 16 13"><path d="M5 9A6 6 0 0 1 11 3M7.5 10A3.5 3.5 0 0 1 11 6.5M2.5 7.5A9 9 0 0 1 15 1" fill="none" stroke="#777" stroke-width="1.1"/><circle cx="11.8" cy="11" r="1" fill="#777"/><circle cx="4.5" cy="9.5" r="4" fill="#e01e2a"/><path d="M2.8 7.8L6.2 11.2M6.2 7.8L2.8 11.2" stroke="#fff" stroke-width="1"/></svg>
<svg style="left:1187px;top:743px;" width="15" height="11" viewBox="0 0 15 11"><path d="M0.6 3.3H3L6.5 0.6V10.4L3 7.7H0.6Z" fill="none" stroke="#fff" stroke-width="1.1"/><path d="M9 3L13.5 7.5M13.5 3L9 7.5" stroke="#fff" stroke-width="1.1"/></svg>
<div class="t" style="left:1213.4px;top:740.93px;font-size:11.5px;line-height:14px;color:#fff;letter-spacing:-0.2px;">ENG</div>
<div class="t" style="left:1264.3px;top:732.23px;font-size:12px;line-height:14px;color:#fff;letter-spacing:-0.45px;">19:22</div>
<div class="t" style="left:1250px;top:749.43px;font-size:12px;line-height:14px;color:#fff;letter-spacing:-0.3px;">19/05/2018</div>
<svg style="left:1325px;top:740px;" width="17" height="16" viewBox="0 0 17 16"><path d="M0.6 0.6H16.4V11.4H10L7 14.8V11.4H0.6Z" fill="none" stroke="#fff" stroke-width="1.2"/></svg>
<div style="left:1361px;top:728px;width:1px;height:40px;background:#444;"></div>
<div style="left:511px;top:186px;width:736px;height:375px;background:#fff;border:1px solid #a8a8a8;"></div>
<div class="t" style="left:521.4px;top:192.23px;font-size:12px;line-height:14px;color:#111;letter-spacing:-0.2px;">Edit Fill</div>
<svg style="left:1223px;top:192px;" width="13" height="11" viewBox="0 0 13 11"><path d="M0.7 0.5L12.3 10.5M12.3 0.5L0.7 10.5" stroke="#333" stroke-width="1.5"/></svg>
<div style="left:516px;top:212px;width:726px;height:344px;background:#f2f2f2;"></div>
<div style="left:516px;top:519px;width:726px;height:37px;background:#e9e9e9;"></div>
<div style="left:521px;top:248px;width:717px;height:1px;background:#d8d8d8;"></div>
<svg style="left:526px;top:222px;" width="16" height="16" viewBox="0 0 16 16"><rect x="0.5" y="0.5" width="15" height="15" fill="#fff" stroke="#777" stroke-width="1"/><path d="M2.5 2.5L13.5 13.5M13.5 2.5L2.5 13.5" stroke="#6a6c98" stroke-width="1"/></svg>
<div style="left:551px;top:219px;width:23px;height:23px;background:#fff;border:1px solid #a8a8a8;"></div>
<div style="left:554px;top:222px;width:16px;height:16px;background:#60629a;"></div>
<svg style="left:582px;top:222px;" width="16" height="16" viewBox="0 0 16 16"><defs><linearGradient id="fg" x1="0" y1="0" x2="1" y2="1"><stop offset="0" stop-color="#e8e8f2"/><stop offset="1" stop-color="#595b92"/></linearGradient></defs><rect x="0.5" y="0.5" width="15" height="15" fill="url(#fg)" stroke="#6a6c98" stroke-width="1"/></svg>
<svg style="left:610px;top:222px;" width="16" height="16" viewBox="0 0 16 16"><rect x="0.5" y="0.5" width="15" height="15" fill="#fff" stroke="#666" stroke-width="1"/><path d="M3 1.7999999999999998L4.6 4L3 6.2L1.4 4Z" fill="#60629a"/><path d="M3 5.8L4.6 8L3 10.2L1.4 8Z" fill="#60629a"/><path d="M3 9.8L4.6 12L3 14.2L1.4 12Z" fill="#60629a"/><path d="M6.5 1.7999999999999998L8.1 4L6.5 6.2L4.9 4Z" fill="#60629a"/><path d="M6.5 5.8L8.1 8L6.5 10.2L4.9 8Z" fill="#60629a"/><path d="M6.5 9.8L8.1 12L6.5 14.2L4.9 12Z" fill="#60629a"/><path d="M10 1.7999999999999998L11.6 4L10 6.2L8.4 4Z" fill="#60629a"/><path d="M10 5.8L11.6 8L10 10.2L8.4 8Z" fill="#60629a"/><path d="M10 9.8L11.6 12L10 14.2L8.4 12Z" fill="#60629a"/><path d="M13.5 1.7999999999999998L15.1 4L13.5 6.2L11.9 4Z" fill="#60629a"/><path d="M13.5 5.8L15.1 8L13.5 10.2L11.9 8Z" fill="#60629a"/><path d="M13.5 9.8L15.1 12L13.5 14.2L11.9 12Z" fill="#60629a"/></svg>
<svg style="left:638px;top:222px;" width="16" height="16" viewBox="0 0 16 16"><rect x="0" y="0" width="16" height="16" fill="#60629a"/><g fill="none" stroke="#e8e8f4" stroke-width="0.9"><path d="M5 9A3 3 0 1 1 8 6A1.6 1.6 0 1 0 6.4 7.6"/><path d="M10 2.5A2.5 2.5 0 1 1 12.5 5A1.2 1.2 0 1 0 11.3 3.8"/><path d="M3.5 15A3 3 0 0 1 6.5 11.5A1.5 1.5 0 0 1 5 13"/><path d="M13.5 9.5A2.8 2.8 0 1 1 10.7 12.3A1.3 1.3 0 1 0 12 11"/></g><rect x="0.5" y="0.5" width="15" height="15" fill="none" stroke="#555" stroke-width="1"/></svg>
<svg style="left:666px;top:222px;" width="16" height="16" viewBox="0 0 16 16"><rect x="0.5" y="0.5" width="15" height="15" fill="#fff" stroke="#666" stroke-width="1"/><rect x="1" y="1" width="8" height="14" fill="#60629a"/></svg>
<svg style="left:694px;top:222px;" width="16" height="16" viewBox="0 0 16 16"><defs><filter id="tx"><feTurbulence type="fractalNoise" baseFrequency="0.45" numOctaves="2" seed="3"/><feColorMatrix values="0 0 0 0 0.75  0 0 0 0 0.76  0 0 0 0 0.86  0 0 0 1.6 -0.35"/></filter></defs><rect x="0" y="0" width="16" height="16" fill="#8587ad"/><rect x="1" y="1" width="14" height="14" filter="url(#tx)"/><rect x="0.5" y="0.5" width="15" height="15" fill="none" stroke="#555" stroke-width="1"/></svg>
<svg style="left:722px;top:222px;" width="15" height="15" viewBox="0 0 15 15"><rect x="0" y="0" width="15" height="15" fill="#fff"/><rect x="1.00" y="1.00" width="1.25" height="1.25" fill="#2a2a3a"/><rect x="1.00" y="3.50" width="1.25" height="1.25" fill="#2a2a3a"/><rect x="1.00" y="6.00" width="1.25" height="1.25" fill="#2a2a3a"/><rect x="1.00" y="8.50" width="1.25" height="1.25" fill="#2a2a3a"/><rect x="1.00" y="11.00" width="1.25" height="1.25" fill="#2a2a3a"/><rect x="1.00" y="13.50" width="1.25" height="1.25" fill="#2a2a3a"/><rect x="2.25" y="2.25" width="1.25" height="1.25" fill="#2a2a3a"/><rect x="2.25" y="4.75" width="1.25" height="1.25" fill="#2a2a3a"/><rect x="2.25" y="7.25" width="1.25" height="1.25" fill="#2a2a3a"/><rect x="2.25" y="9.75" width="1.25" height="1.25" fill="#2a2a3a"/><rect x="2.25" y="12.25" width="1.25" height="1.25" fill="#2a2a3a"/><rect x="3.50" y="1.00" width="1.25" height="1.25" fill="#2a2a3a"/><rect x="3.50" y="3.50" width="1.25" height="1.25" fill="#2a2a3a"/><rect x="4.75" y="2.25" width="1.25" height="1.25" fill="#2a2a3a"/><rect x="4.75" y="4.75" width="1.25" height="1.25" fill="#2a2a3a"/><rect x="6.00" y="1.00" width="1.25" height="1.25" fill="#2a2a3a"/><rect x="6.00" y="3.50" width="1.25" height="1.25" fill="#2a2a3a"/><rect x="7.25" y="2.25" width="1.25" height="1.25" fill="#2a2a3a"/><rect x="7.25" y="4.75" width="1.25" height="1.25" fill="#2a2a3a"/><rect x="8.50" y="1.00" width="1.25" height="1.25" fill="#2a2a3a"/><rect x="8.50" y="3.50" width="1.25" height="1.25" fill="#2a2a3a"/><rect x="9.75" y="2.25" width="1.25" height="1.25" fill="#2a2a3a"/><rect x="9.75" y="4.75" width="1.25" height="1.25" fill="#2a2a3a"/><rect x="11.00" y="1.00" width="1.25" height="1.25" fill="#2a2a3a"/><rect x="11.00" y="3.50" width="1.25" height="1.25" fill="#2a2a3a"/><rect x="12.25" y="2.25" width="1.25" height="1.25" fill="#2a2a3a"/><rect x="12.25" y="4.75" width="1.25" height="1.25" fill="#2a2a3a"/><rect x="13.50" y="1.00" width="1.25" height="1.25" fill="#2a2a3a"/><rect x="13.50" y="3.50" width="1.25" height="1.25" fill="#2a2a3a"/><rect x="3.5" y="5.8" width="11" height="8.7" fill="#fff" stroke="#222" stroke-width="0.9"/><text x="4.3" y="13.4" font-size="7.8" font-weight="bold" font-family="Liberation Sans" fill="#111" textLength="9.6" lengthAdjust="spacingAndGlyphs">PS</text><rect x="0.5" y="0.5" width="14" height="14" fill="none" stroke="#555" stroke-width="1"/></svg>
<div style="left:523px;top:277px;width:256px;height:229px;background:#fff;border:1px solid #dadada;"></div>
<div style="left:527px;top:279px;width:250px;height:226px;background:#f0f0f0;"></div>
<div style="left:560px;top:257px;width:32px;height:21px;background:#efefef;border:1px solid #dadada;border-bottom:none;"></div>
<div style="left:591px;top:257px;width:34px;height:21px;background:#efefef;border:1px solid #dadada;border-bottom:none;"></div>
<div style="left:523px;top:255px;width:38px;height:24px;background:#fff;border:1px solid #dadada;border-bottom:none;"></div>
<svg style="left:532px;top:258px;" width="14" height="14" viewBox="0 0 14 14"><defs><linearGradient id="t1" x1="1" y1="0" x2="0" y2="1"><stop offset="0" stop-color="#e02020"/><stop offset="0.5" stop-color="#e8b0b8"/><stop offset="1" stop-color="#202040"/></linearGradient></defs><rect x="0.5" y="0.5" width="13" height="13" fill="url(#t1)" stroke="#222235" stroke-width="1"/></svg>
<svg style="left:565px;top:260px;" width="16" height="15" viewBox="0 0 16 15"><circle cx="8" cy="7.5" r="5.5" fill="none" stroke="url(#cw)" stroke-width="3"/><defs><linearGradient id="cw" x1="0" y1="0" x2="1" y2="1"><stop offset="0" stop-color="#2a8a3a"/><stop offset="0.3" stop-color="#e8c040"/><stop offset="0.6" stop-color="#d04040"/><stop offset="1" stop-color="#4050b0"/></linearGradient></defs></svg>
<svg style="left:600px;top:260px;" width="14" height="14" viewBox="0 0 14 14"><rect x="0" y="0" width="14" height="14" fill="#111"/><rect x="1.0" y="1.0" width="3.6" height="3.6" fill="#1010c0"/><rect x="5.2" y="1.0" width="3.6" height="3.6" fill="#40a0e0"/><rect x="9.4" y="1.0" width="3.6" height="3.6" fill="#20b020"/><rect x="1.0" y="5.2" width="3.6" height="3.6" fill="#c01010"/><rect x="5.2" y="5.2" width="3.6" height="3.6" fill="#e090e0"/><rect x="9.4" y="5.2" width="3.6" height="3.6" fill="#909090"/><rect x="1.0" y="9.4" width="3.6" height="3.6" fill="#e0e020"/><rect x="5.2" y="9.4" width="3.6" height="3.6" fill="#e0e020"/><rect x="9.4" y="9.4" width="3.6" height="3.6" fill="#10801a"/></svg>
<div style="left:532px;top:284px;width:214px;height:215px;background:linear-gradient(to top,#000,rgba(0,0,0,0)),linear-gradient(to right,#fff,#00ffc8);"></div>
<div style="left:732px;top:314px;width:9px;height:9px;border:1px solid #707a78;"></div>
<div style="left:755px;top:283px;width:18px;height:217px;background:linear-gradient(to bottom,#ff0000 0%,#ff00ff 16.67%,#0000ff 33.33%,#00ffff 50%,#00ff00 66.67%,#ffff00 83.33%,#ff0000 100%);"></div>
<div style="left:752px;top:396px;width:24px;height:5px;border:1px solid #111;background:rgba(255,255,255,0.35);"></div>
<svg style="left:804px;top:281px;" width="17" height="17" viewBox="0 0 17 17"><path d="M1.5 15.5L8.5 8.5" stroke="#707080" stroke-width="1.8" stroke-linecap="round"/><path d="M6.5 6.5L10.5 10.5L12 9L8 5Z" fill="#25253a"/><path d="M9 6L12.5 2.5A2 2 0 0 1 14.5 4.5L11 8Z" fill="#25253a"/></svg>
<div style="left:833px;top:276px;width:123px;height:53px;background:#07d6aa;border:1px solid #5f8f85;"></div>
<svg style="left:967px;top:295px;" width="14" height="14" viewBox="0 0 14 14"><path d="M12.8 0.8V4.8H4" fill="none" stroke="#151520" stroke-width="2"/><path d="M0.3 4.8L4.8 1.2V8.4Z" fill="#151520"/><path d="M1.2 13.2V9.2H10" fill="none" stroke="#151520" stroke-width="2"/><path d="M13.7 9.2L9.2 5.6V12.8Z" fill="#151520"/></svg>
<div class="t" style="left:800px;top:357.03px;font-size:12px;line-height:14px;color:#111;letter-spacing:-0.2px;">Model:</div>
<div style="left:800px;top:375px;width:182px;height:23px;background:#e1e1e1;border:1px solid #adadad;"></div>
<div class="t" style="left:805px;top:379.63px;font-size:12px;line-height:14px;color:#111;letter-spacing:-0.2px;">RGB</div>
<svg style="left:968px;top:385px;" width="9" height="5" viewBox="0 0 9 5"><path d="M0.5 0.5L4.5 4.5L8.5 0.5" fill="none" stroke="#444" stroke-width="1.1"/></svg>
<div class="t" style="left:800px;top:409.83px;font-size:12px;line-height:14px;color:#111;letter-spacing:-0.3px;">Color Viewers:</div>
<div style="left:800px;top:428px;width:182px;height:23px;background:#e1e1e1;border:1px solid #adadad;"></div>
<div class="t" style="left:805px;top:432.63px;font-size:12px;line-height:14px;color:#111;letter-spacing:-0.3px;">HSB - Hue Based (Default)</div>
<svg style="left:968px;top:438px;" width="9" height="5" viewBox="0 0 9 5"><path d="M0.5 0.5L4.5 4.5L8.5 0.5" fill="none" stroke="#444" stroke-width="1.1"/></svg>
<div style="left:1002px;top:254px;width:1px;height:255px;background:#d8d8d8;"></div>
<div style="left:1020px;top:276px;width:84px;height:23px;background:#e1e1e1;border:1px solid #adadad;"></div>
<div class="t" style="left:1025px;top:280.63px;font-size:12px;line-height:14px;color:#111;letter-spacing:-0.2px;">RGB</div>
<svg style="left:1089px;top:286px;" width="9" height="5" viewBox="0 0 9 5"><path d="M0.5 0.5L4.5 4.5L8.5 0.5" fill="none" stroke="#444" stroke-width="1.1"/></svg>
<div style="left:1118px;top:276px;width:84px;height:23px;background:#e1e1e1;border:1px solid #adadad;"></div>
<div class="t" style="left:1122.3px;top:280.63px;font-size:12px;line-height:14px;color:#111;letter-spacing:-0.2px;">Hex</div>
<svg style="left:1189px;top:286px;" width="9" height="5" viewBox="0 0 9 5"><path d="M0.5 0.5L4.5 4.5L8.5 0.5" fill="none" stroke="#444" stroke-width="1.1"/></svg>
<div class="t" style="left:1031.7px;top:312.93px;font-size:12px;line-height:14px;color:#111;">R</div>
<div style="left:1052px;top:308px;width:53px;height:23px;background:#fff;border:1px solid #7a7a7a;"></div>
<div class="t" style="left:1052px;top:313.2px;width:35.2px;text-align:right;font-size:12px;line-height:14px;color:#111;letter-spacing:-0.5px;">7</div>
<div style="left:1092px;top:311px;width:10px;height:17px;background:#eeeeee;"></div>
<svg style="left:1094.5px;top:314px;" width="6" height="12" viewBox="0 0 6 12"><path d="M3 0V11.5" stroke="#111" stroke-width="1.3"/><circle cx="3" cy="5.8" r="2" fill="#fff" stroke="#111" stroke-width="1.2"/></svg>
<div class="t" style="left:1031.7px;top:339.43px;font-size:12px;line-height:14px;color:#111;">G</div>
<div style="left:1052px;top:334px;width:53px;height:23px;background:#fff;border:1px solid #7a7a7a;"></div>
<div class="t" style="left:1052px;top:339.7px;width:35.2px;text-align:right;font-size:12px;line-height:14px;color:#111;letter-spacing:-0.5px;">214</div>
<div style="left:1092px;top:337px;width:10px;height:17px;background:#eeeeee;"></div>
<svg style="left:1094.5px;top:340px;" width="6" height="12" viewBox="0 0 6 12"><path d="M3 0V11.5" stroke="#111" stroke-width="1.3"/><circle cx="3" cy="5.8" r="2" fill="#fff" stroke="#111" stroke-width="1.2"/></svg>
<div class="t" style="left:1031.7px;top:365.93px;font-size:12px;line-height:14px;color:#111;">B</div>
<div style="left:1052px;top:361px;width:53px;height:23px;background:#fff;border:1px solid #7a7a7a;"></div>
<div class="t" style="left:1052px;top:366.2px;width:35.2px;text-align:right;font-size:12px;line-height:14px;color:#111;letter-spacing:-0.5px;">170</div>
<div style="left:1092px;top:364px;width:10px;height:17px;background:#eeeeee;"></div>
<svg style="left:1094.5px;top:367px;" width="6" height="12" viewBox="0 0 6 12"><path d="M3 0V11.5" stroke="#111" stroke-width="1.3"/><circle cx="3" cy="5.8" r="2" fill="#fff" stroke="#111" stroke-width="1.2"/></svg>
<div style="left:1129px;top:308px;width:74px;height:23px;background:#fff;border:1px solid #7a7a7a;"></div>
<div class="t" style="left:1135.1px;top:312.09px;font-size:11.4px;line-height:14px;color:#111;letter-spacing:-0.1px;">#07D6AA</div>
<svg style="left:1124px;top:302px;" width="84" height="34" viewBox="0 0 84 34"><rect x="1.75" y="1.75" width="80.5" height="30.5" rx="1.5" fill="none" stroke="#e0000e" stroke-width="3.5"/></svg>
<div style="left:1020px;top:428px;width:182px;height:23px;background:#e1e1e1;border:1px solid #adadad;"></div>
<div style="left:1187px;top:429px;width:1px;height:21px;background:#adadad;"></div>
<div class="t" style="left:1026.5px;top:431.83px;font-size:12px;line-height:14px;color:#111;letter-spacing:-0.2px;"><u style="border-bottom-width:1px;">A</u>dd To Palette</div>
<svg style="left:1189.5px;top:437px;" width="10" height="6" viewBox="0 0 10 6"><path d="M0 0H10L5 5.5Z" fill="#111"/></svg>
<div class="t" style="left:1020px;top:465.43px;font-size:12px;line-height:14px;color:#111;letter-spacing:-0.2px;">Name:</div>
<div style="left:1020px;top:484px;width:182px;height:23px;background:#fff;border:1px solid #7a7a7a;"></div>
<svg style="left:1189px;top:494px;" width="9" height="5" viewBox="0 0 9 5"><path d="M0.5 0.5L4.5 4.5L8.5 0.5" fill="none" stroke="#555" stroke-width="1.1"/></svg>
<div style="left:522.8px;top:531px;width:13.5px;height:13.5px;background:#fff;border:1px solid #333;"></div>
<div class="t" style="left:539px;top:531.13px;font-size:12px;line-height:14px;color:#111;letter-spacing:0.1px;">Fill winding</div>
<div style="left:622px;top:531px;width:13.5px;height:13.5px;background:#fff;border:1px solid #333;"></div>
<div class="t" style="left:638.4px;top:531.13px;font-size:12px;line-height:14px;color:#111;letter-spacing:0.1px;">Overprint fill</div>
<div style="left:1074px;top:526px;width:78px;height:23px;background:#e1e1e1;border:1px solid #adadad;"></div>
<div class="t" style="left:1105.5px;top:531.13px;font-size:12px;line-height:14px;color:#111;letter-spacing:-0.2px;">OK</div>
<div style="left:1157px;top:526px;width:78px;height:23px;background:#e1e1e1;border:1px solid #adadad;"></div>
<div class="t" style="left:1178.5px;top:531.13px;font-size:12px;line-height:14px;color:#111;letter-spacing:-0.2px;">Cancel</div>
<svg style="left:0px;top:0px;pointer-events:none;" width="1366" height="768" viewBox="0 0 1366 768"><path d="M776.4 540.5L959 699" stroke="#e3121b" stroke-width="3.2" stroke-linecap="round"/><path d="M968.2 707.6L954 701.8L961.8 693.8Z" fill="#e3121b"/></svg>
</body></html>
